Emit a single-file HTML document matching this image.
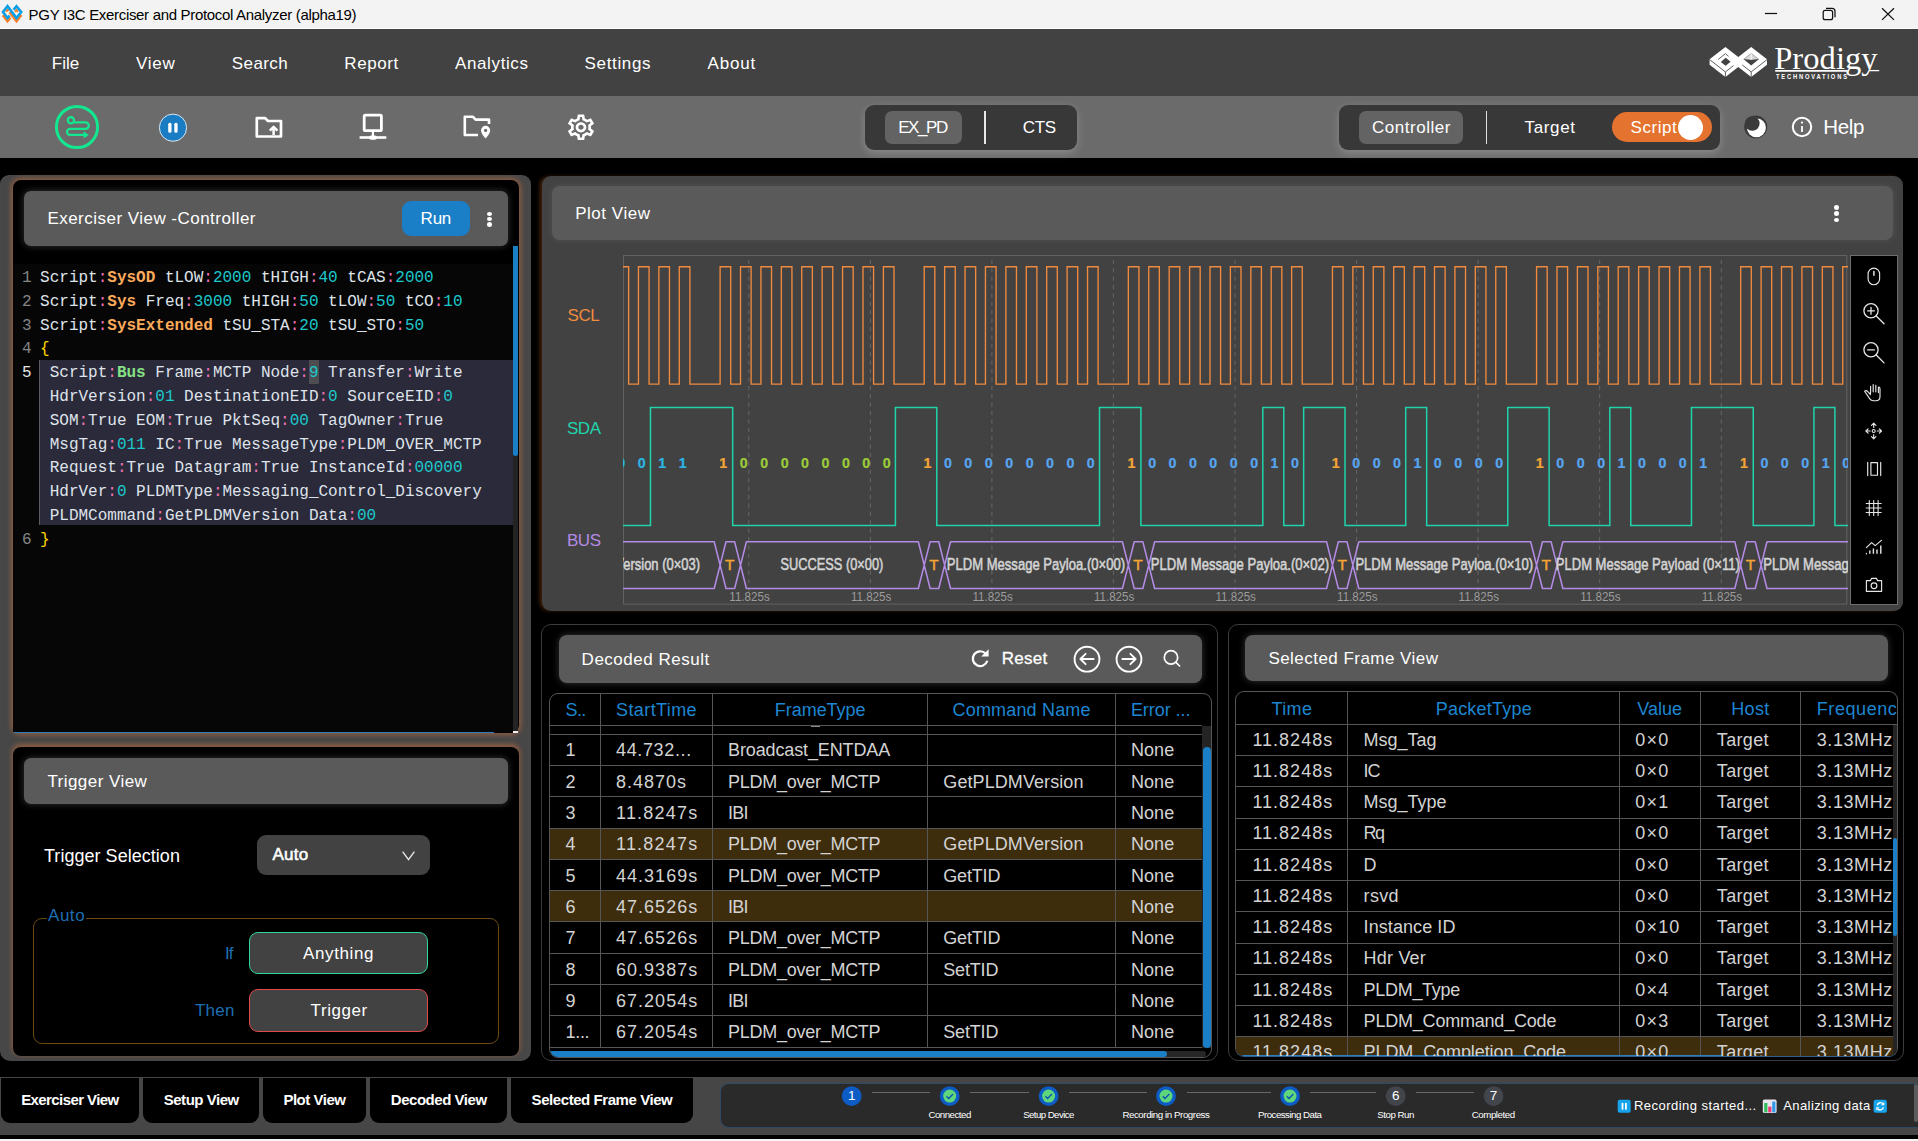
<!DOCTYPE html><html><head><meta charset="utf-8"><title>PGY I3C Exerciser and Protocol Analyzer</title><style>html,body{margin:0;padding:0}body{width:1918px;height:1141px;position:relative;overflow:hidden;background:#000;font-family:'Liberation Sans',sans-serif}</style></head><body><div style="position:absolute;left:0px;top:0px;width:1918px;height:28px;background:#f3f3f3"></div><div style="position:absolute;left:0px;top:28px;width:1918px;height:1px;background:#fbfbfb"></div><svg style="position:absolute;left:0;top:0" width="26" height="28" viewBox="0 0 26 28">
<g fill="none" stroke-width="2.6" stroke-linejoin="miter">
<path d="M2.8 15.3 L7.5 21.2 L10.4 17.6 M9.5 12.2 L16.5 21.2 L21.4 15.0" stroke="#ff7f27"/>
<path d="M5.6 11.6 L7.5 9.9 L8.6 11.0 M14.9 11.9 L16.5 10.0 L18.0 11.9" stroke="#ff7f27" stroke-width="2"/>
<path d="M9.6 15.6 L7.5 18.1 L3 12 L7.5 6.2 L16.5 18 L21.2 12 L16.5 6.2 L13.6 9.8" stroke="#0a9fe8"/>
</g></svg><span style="position:absolute;left:28.60px;top:5.15px;line-height:20px;font-size:15px;color:#000;white-space:pre;letter-spacing:-0.317px;">PGY I3C Exerciser and Protocol Analyzer (alpha19)</span><svg style="position:absolute;left:1750px;top:0" width="168" height="28" viewBox="1750 0 168 28" fill="none" stroke="#111" stroke-width="1.25">
<path d="M1764.9 13.5 H1777.1"/>
<rect x="1823.2" y="10.4" width="9.4" height="9.3" rx="2"/>
<path d="M1826 8.3 H1832 a3 3 0 0 1 3 3 V17.2"/>
<path d="M1882 8.2 L1894 19.9 M1894 8.2 L1882 19.9"/>
</svg><div style="position:absolute;left:0px;top:29px;width:1918px;height:67px;background:#424242"></div><span style="position:absolute;left:51.80px;top:53.15px;line-height:22px;font-size:17px;color:#fff;white-space:pre;">File</span><span style="position:absolute;left:136.00px;top:53.15px;line-height:22px;font-size:17px;color:#fff;white-space:pre;letter-spacing:0.718px;">View</span><span style="position:absolute;left:231.80px;top:53.15px;line-height:22px;font-size:17px;color:#fff;white-space:pre;letter-spacing:0.405px;">Search</span><span style="position:absolute;left:344.30px;top:53.15px;line-height:22px;font-size:17px;color:#fff;white-space:pre;letter-spacing:0.594px;">Report</span><span style="position:absolute;left:455.00px;top:53.15px;line-height:22px;font-size:17px;color:#fff;white-space:pre;letter-spacing:0.621px;">Analytics</span><span style="position:absolute;left:584.50px;top:53.15px;line-height:22px;font-size:17px;color:#fff;white-space:pre;letter-spacing:0.666px;">Settings</span><span style="position:absolute;left:707.60px;top:53.15px;line-height:22px;font-size:17px;color:#fff;white-space:pre;letter-spacing:0.791px;">About</span><svg style="position:absolute;left:1700px;top:36px" width="200" height="56" viewBox="1700 36 200 56"><path d="M1709.6000000000001 59.3 L1725.4 47.0 L1741.2 59.3 V64.7 L1725.4 77.0 L1709.6000000000001 64.7 Z" fill="#fff"/><path d="M1735.4 59.3 L1751.2 47.0 L1767.0 59.3 V64.7 L1751.2 77.0 L1735.4 64.7 Z" fill="#fff"/><g stroke="#424242" stroke-width="0.85" fill="none"><path d="M1709.6000000000001 59.599999999999994 L1725.4 71.89999999999999 L1733.6000000000001 65.5 M1725.4 71.89999999999999 V77.0"/><path d="M1742.2 64.89999999999999 L1751.2 71.89999999999999 L1767.0 59.599999999999994 M1751.2 71.89999999999999 V77.0"/></g><path d="M1743.6000000000001 59.3 L1751.2 53.4 L1758.8 59.3 Z" fill="#d9d9d9"/><path d="M1743.4 58.9 L1751.2 65.6 L1759.0 58.9 L1751.2 59.8 Z" fill="#424242"/><path d="M1743.6000000000001 59.3 L1751.2 53.4 L1758.8 59.3" stroke="#8c8c8c" stroke-width="0.7" fill="none"/><path d="M1751.2 53.4 V59.699999999999996" stroke="#fff" stroke-width="0.9"/><path d="M1720.8000000000002 61.9 L1725.7 57.699999999999996 L1730.6000000000001 61.699999999999996 L1725.7 65.7 Z" fill="#424242"/><path d="M1718.1000000000001 59.5 L1725.4 53.699999999999996 L1728.6000000000001 56.3" stroke="#424242" stroke-width="0.8" fill="none"/><path d="M1775.2 70.9 H1847" stroke="#fff" stroke-width="1.9"/><path d="M1869.5 70.6 H1879.2" stroke="#fff" stroke-width="1.3"/></svg><span style="position:absolute;left:1774.20px;top:37.85px;line-height:40px;font-size:32.5px;color:#fff;white-space:pre;font-family:'Liberation Serif',serif;letter-spacing:0.077px;">Prodigy</span><span style="position:absolute;left:1775.60px;top:72.15px;line-height:10px;font-size:7.4px;color:#fff;white-space:pre;font-weight:700;letter-spacing:2.338px;transform:scaleX(0.78);transform-origin:0 50%;">TECHNOVATIONS</span><div style="position:absolute;left:0px;top:96px;width:1918px;height:62px;background:#6b6b6b"></div><svg style="position:absolute;left:50px;top:100px" width="56" height="56" viewBox="50 100 56 56" fill="none">
<circle cx="77" cy="127" r="20.6" stroke="#12e890" stroke-width="3"/>
<g stroke="#12e890" stroke-width="2.2" stroke-linecap="round">
<circle cx="70.9" cy="120.3" r="3.1"/>
<path d="M74.6 122.4 H85.6 a3.2 3.2 0 0 1 0 6.4 H70 a3.05 3.05 0 0 0 0 6.1 H84.5"/>
</g>
<path d="M83.6 131.2 L88.8 134.9 L83.6 138.6 Z" fill="#12e890"/>
</svg><svg style="position:absolute;left:155px;top:110px" width="36" height="36" viewBox="155 110 36 36">
<circle cx="173" cy="127.7" r="13.6" fill="#1a7dc4" stroke="#dbe6ee" stroke-width="1"/>
<rect x="168.2" y="122.8" width="3.3" height="10" rx="1.5" fill="#fff"/><rect x="174.3" y="122.8" width="3.3" height="10" rx="1.5" fill="#fff"/>
</svg><svg style="position:absolute;left:250px;top:110px" width="40" height="36" viewBox="250 110 40 36" fill="none" stroke="#fff" stroke-width="2.7" stroke-linejoin="round">
<path d="M256.8 118.2 H265.2 L268 121 H281 V136.5 H256.8 Z"/>
<path d="M273.6 135 V127.5 M269.8 130.6 L273.6 126.8 L277.4 130.6" stroke-width="2.5"/>
</svg><svg style="position:absolute;left:355px;top:110px" width="40" height="36" viewBox="355 110 40 36" fill="none" stroke="#fff">
<rect x="364.2" y="115.2" width="17.2" height="15.4" rx="1.2" stroke-width="2.8"/>
<path d="M372.9 130.6 V136" stroke-width="2.2"/>
<path d="M359.6 137.5 H386.3" stroke-width="2.6"/>
<rect x="369" y="135.4" width="8" height="4.4" rx="2.2" fill="#fff" stroke="none"/>
</svg><svg style="position:absolute;left:458px;top:110px" width="40" height="36" viewBox="458 110 40 36" fill="none" stroke="#fff" stroke-width="2.6" stroke-linejoin="round">
<path d="M478 135 H464.8 V116.8 H473 L475.6 119.6 H489 V124"/>
<path d="M485.6 125.8 a4.6 4.6 0 0 1 4.6 4.6 c0 3.2 -4.6 8 -4.6 8 c0 0 -4.6 -4.8 -4.6 -8 a4.6 4.6 0 0 1 4.6 -4.6 Z" fill="#fff" stroke="none"/>
<circle cx="485.6" cy="130.4" r="1.6" fill="#6b6b6b" stroke="none"/>
</svg><svg style="position:absolute;left:565px;top:112.2px" width="32" height="30.6" viewBox="0 0 24 24" preserveAspectRatio="none" fill="#fff">
<path d="M19.43 12.98c.04-.32.07-.64.07-.98 0-.34-.03-.66-.07-.98l2.11-1.65c.19-.15.24-.42.12-.64l-2-3.46c-.09-.16-.26-.25-.44-.25-.06 0-.12.01-.17.03l-2.49 1c-.52-.4-1.08-.73-1.69-.98l-.38-2.65C14.46 2.18 14.25 2 14 2h-4c-.25 0-.46.18-.49.42l-.38 2.65c-.61.25-1.17.59-1.69.98l-2.49-1c-.06-.02-.12-.03-.18-.03-.17 0-.34.09-.43.25l-2 3.46c-.13.22-.07.49.12.64l2.11 1.65c-.04.32-.07.65-.07.98 0 .33.03.66.07.98l-2.11 1.65c-.19.15-.24.42-.12.64l2 3.46c.09.16.26.25.44.25.06 0 .12-.01.17-.03l2.49-1c.52.4 1.08.73 1.69.98l.38 2.65c.03.24.24.42.49.42h4c.25 0 .46-.18.49-.42l.38-2.65c.61-.25 1.17-.59 1.69-.98l2.49 1c.06.02.12.03.18.03.17 0 .34-.09.43-.25l2-3.46c.12-.22.07-.49-.12-.64l-2.11-1.65zm-1.98-1.71c.04.31.05.52.05.73 0 .21-.02.43-.05.73l-.14 1.13.89.7 1.08.84-.7 1.21-1.27-.51-1.04-.42-.9.68c-.43.32-.84.56-1.25.73l-1.06.43-.16 1.13-.2 1.35h-1.4l-.19-1.35-.16-1.13-1.06-.43c-.43-.18-.83-.41-1.23-.71l-.91-.7-1.06.43-1.27.51-.7-1.21 1.08-.84.89-.7-.14-1.13c-.03-.31-.05-.54-.05-.74s.02-.43.05-.73l.14-1.13-.89-.7-1.08-.84.7-1.21 1.27.51 1.04.42.9-.68c.43-.32.84-.56 1.25-.73l1.06-.43.16-1.13.2-1.35h1.39l.19 1.35.16 1.13 1.06.43c.43.18.83.41 1.23.71l.91.7 1.06-.43 1.27-.51.7 1.21-1.07.85-.89.7.14 1.13zM12 8c-2.21 0-4 1.79-4 4s1.790 4 4 4 4-1.79 4-4-1.79-4-4-4zm0 6c-1.1 0-2-.9-2-2s.9-2 2-2 2 .9 2 2-.9 2-2 2z"/>
</svg><div style="position:absolute;left:865px;top:105px;width:212px;height:45px;background:#383838;border-radius:9px;box-shadow:0 3px 8px rgba(255,255,255,.22)"></div><div style="position:absolute;left:885px;top:111px;width:77px;height:33px;background:#636363;border-radius:7px"></div><div style="position:absolute;left:984.4px;top:111px;width:1.8px;height:33px;background:#e8e8e8"></div><span style="position:absolute;left:898.20px;top:117.05px;line-height:22px;font-size:17px;color:#fff;white-space:pre;letter-spacing:-1.413px;">EX_PD</span><span style="position:absolute;left:1022.80px;top:117.05px;line-height:22px;font-size:17px;color:#fff;white-space:pre;letter-spacing:-0.300px;">CTS</span><div style="position:absolute;left:1339px;top:105px;width:381px;height:45px;background:#383838;border-radius:9px;box-shadow:0 3px 8px rgba(255,255,255,.22)"></div><div style="position:absolute;left:1359px;top:111px;width:104px;height:33px;background:#636363;border-radius:7px"></div><div style="position:absolute;left:1486px;top:111px;width:1.2px;height:33px;background:#e0e0e0"></div><span style="position:absolute;left:1372.00px;top:117.05px;line-height:22px;font-size:17px;color:#fff;white-space:pre;letter-spacing:0.533px;">Controller</span><span style="position:absolute;left:1524.50px;top:117.05px;line-height:22px;font-size:17px;color:#fff;white-space:pre;letter-spacing:0.650px;">Target</span><div style="position:absolute;left:1611.7px;top:111.6px;width:100.3px;height:30.8px;background:#e57330;border-radius:16px"></div><span style="position:absolute;left:1630.50px;top:117.05px;line-height:22px;font-size:17px;color:#fff;white-space:pre;letter-spacing:0.546px;">Script</span><div style="position:absolute;left:1678.2px;top:114.8px;width:25px;height:25px;background:#fff;border-radius:50%"></div><svg style="position:absolute;left:1740px;top:112px" width="32" height="32" viewBox="1740 112 32 32">
<circle cx="1755.7" cy="126.9" r="11.5" fill="#3a3a3a"/><circle cx="1756.4" cy="127.7" r="9.5" fill="#fff"/><circle cx="1752.3" cy="123.5" r="7.3" fill="#3a3a3a"/>
</svg><svg style="position:absolute;left:1788px;top:113px" width="28" height="28" viewBox="1788 113 28 28" fill="none">
<circle cx="1802" cy="127" r="9.2" stroke="#fff" stroke-width="2"/>
<path d="M1802 126 V132" stroke="#fff" stroke-width="1.8"/><circle cx="1802" cy="122.6" r="1.15" fill="#fff"/>
</svg><span style="position:absolute;left:1823.20px;top:112.65px;line-height:27px;font-size:20.5px;color:#fff;white-space:pre;letter-spacing:-0.324px;">Help</span><div style="position:absolute;left:0px;top:175px;width:531px;height:885.5px;background:#474747;border-radius:9px 9px 10px 10px"></div><div style="position:absolute;left:13px;top:180.3px;width:506px;height:552.7px;background:#000;border-radius:8px;box-shadow:0 0 5px 1.5px rgba(200,112,62,.55);"></div><div style="position:absolute;left:24px;top:191px;width:484px;height:55px;background:#5a5a5a;border-radius:7px;box-shadow:0 0 6px 1px rgba(200,200,200,.2);"></div><span style="position:absolute;left:47.40px;top:208.45px;line-height:22px;font-size:17px;color:#fff;white-space:pre;letter-spacing:0.476px;">Exerciser View -Controller</span><div style="position:absolute;left:402px;top:201px;width:68px;height:35px;background:#1a7fc6;border-radius:9px"></div><span style="position:absolute;left:420.60px;top:208.05px;line-height:22px;font-size:17px;color:#fff;white-space:pre;letter-spacing:-0.244px;">Run</span><div style="position:absolute;left:486.6px;top:212.20000000000002px;width:5px;height:4.2px;background:#fff;border-radius:50%"></div><div style="position:absolute;left:486.6px;top:217.20000000000002px;width:5px;height:4.2px;background:#fff;border-radius:50%"></div><div style="position:absolute;left:486.6px;top:222.4px;width:5px;height:4.2px;background:#fff;border-radius:50%"></div><div style="position:absolute;left:13px;top:264px;width:500px;height:468px;background:#060606"></div><div style="position:absolute;left:512.6px;top:246px;width:5.6px;height:486.5px;background:#232323"></div><div style="position:absolute;left:513.2px;top:246px;width:5px;height:209.6px;background:#1a7fc6;border-radius:0 0 3px 3px"></div><div style="position:absolute;left:14px;top:731.6px;width:480px;height:1.4px;background:#2a7fc0"></div><div style="position:absolute;left:512.5px;top:730.8px;width:5.5px;height:2.2px;background:#f0f0f0"></div><div style="position:absolute;left:39px;top:360.3px;width:473.8px;height:165.2px;background:#2b2a3a;border-left:1px solid #5a5a62;box-sizing:border-box"></div><div style="position:absolute;left:309.2px;top:360.3px;width:9.8px;height:23.6px;background:#4d4d52"></div><span style="position:absolute;left:14px;width:17.6px;text-align:right;top:266.00px;line-height:24px;font-size:16px;font-family:'Liberation Mono',monospace;color:#858585">1</span><span style="position:absolute;left:40.10px;top:266.00px;line-height:24px;font-size:16px;font-family:'Liberation Mono',monospace;color:#dfe3ea;white-space:pre;">Script</span><span style="position:absolute;left:97.70px;top:266.00px;line-height:24px;font-size:16px;font-family:'Liberation Mono',monospace;color:#ee72b4;white-space:pre;">:</span><span style="position:absolute;left:107.30px;top:266.00px;line-height:24px;font-size:16px;font-family:'Liberation Mono',monospace;color:#fdaa5a;white-space:pre;font-weight:700;">SysOD</span><span style="position:absolute;left:164.90px;top:266.00px;line-height:24px;font-size:16px;font-family:'Liberation Mono',monospace;color:#dfe3ea;white-space:pre;">tLOW</span><span style="position:absolute;left:203.30px;top:266.00px;line-height:24px;font-size:16px;font-family:'Liberation Mono',monospace;color:#ee72b4;white-space:pre;">:</span><span style="position:absolute;left:212.90px;top:266.00px;line-height:24px;font-size:16px;font-family:'Liberation Mono',monospace;color:#1cc8cc;white-space:pre;">2000</span><span style="position:absolute;left:260.90px;top:266.00px;line-height:24px;font-size:16px;font-family:'Liberation Mono',monospace;color:#dfe3ea;white-space:pre;">tHIGH</span><span style="position:absolute;left:308.90px;top:266.00px;line-height:24px;font-size:16px;font-family:'Liberation Mono',monospace;color:#ee72b4;white-space:pre;">:</span><span style="position:absolute;left:318.50px;top:266.00px;line-height:24px;font-size:16px;font-family:'Liberation Mono',monospace;color:#1cc8cc;white-space:pre;">40</span><span style="position:absolute;left:347.30px;top:266.00px;line-height:24px;font-size:16px;font-family:'Liberation Mono',monospace;color:#dfe3ea;white-space:pre;">tCAS</span><span style="position:absolute;left:385.70px;top:266.00px;line-height:24px;font-size:16px;font-family:'Liberation Mono',monospace;color:#ee72b4;white-space:pre;">:</span><span style="position:absolute;left:395.30px;top:266.00px;line-height:24px;font-size:16px;font-family:'Liberation Mono',monospace;color:#1cc8cc;white-space:pre;">2000</span><span style="position:absolute;left:14px;width:17.6px;text-align:right;top:289.80px;line-height:24px;font-size:16px;font-family:'Liberation Mono',monospace;color:#858585">2</span><span style="position:absolute;left:40.10px;top:289.80px;line-height:24px;font-size:16px;font-family:'Liberation Mono',monospace;color:#dfe3ea;white-space:pre;">Script</span><span style="position:absolute;left:97.70px;top:289.80px;line-height:24px;font-size:16px;font-family:'Liberation Mono',monospace;color:#ee72b4;white-space:pre;">:</span><span style="position:absolute;left:107.30px;top:289.80px;line-height:24px;font-size:16px;font-family:'Liberation Mono',monospace;color:#fdaa5a;white-space:pre;font-weight:700;">Sys</span><span style="position:absolute;left:145.70px;top:289.80px;line-height:24px;font-size:16px;font-family:'Liberation Mono',monospace;color:#dfe3ea;white-space:pre;">Freq</span><span style="position:absolute;left:184.10px;top:289.80px;line-height:24px;font-size:16px;font-family:'Liberation Mono',monospace;color:#ee72b4;white-space:pre;">:</span><span style="position:absolute;left:193.70px;top:289.80px;line-height:24px;font-size:16px;font-family:'Liberation Mono',monospace;color:#1cc8cc;white-space:pre;">3000</span><span style="position:absolute;left:241.70px;top:289.80px;line-height:24px;font-size:16px;font-family:'Liberation Mono',monospace;color:#dfe3ea;white-space:pre;">tHIGH</span><span style="position:absolute;left:289.70px;top:289.80px;line-height:24px;font-size:16px;font-family:'Liberation Mono',monospace;color:#ee72b4;white-space:pre;">:</span><span style="position:absolute;left:299.30px;top:289.80px;line-height:24px;font-size:16px;font-family:'Liberation Mono',monospace;color:#1cc8cc;white-space:pre;">50</span><span style="position:absolute;left:328.10px;top:289.80px;line-height:24px;font-size:16px;font-family:'Liberation Mono',monospace;color:#dfe3ea;white-space:pre;">tLOW</span><span style="position:absolute;left:366.50px;top:289.80px;line-height:24px;font-size:16px;font-family:'Liberation Mono',monospace;color:#ee72b4;white-space:pre;">:</span><span style="position:absolute;left:376.10px;top:289.80px;line-height:24px;font-size:16px;font-family:'Liberation Mono',monospace;color:#1cc8cc;white-space:pre;">50</span><span style="position:absolute;left:404.90px;top:289.80px;line-height:24px;font-size:16px;font-family:'Liberation Mono',monospace;color:#dfe3ea;white-space:pre;">tCO</span><span style="position:absolute;left:433.70px;top:289.80px;line-height:24px;font-size:16px;font-family:'Liberation Mono',monospace;color:#ee72b4;white-space:pre;">:</span><span style="position:absolute;left:443.30px;top:289.80px;line-height:24px;font-size:16px;font-family:'Liberation Mono',monospace;color:#1cc8cc;white-space:pre;">10</span><span style="position:absolute;left:14px;width:17.6px;text-align:right;top:313.60px;line-height:24px;font-size:16px;font-family:'Liberation Mono',monospace;color:#858585">3</span><span style="position:absolute;left:40.10px;top:313.60px;line-height:24px;font-size:16px;font-family:'Liberation Mono',monospace;color:#dfe3ea;white-space:pre;">Script</span><span style="position:absolute;left:97.70px;top:313.60px;line-height:24px;font-size:16px;font-family:'Liberation Mono',monospace;color:#ee72b4;white-space:pre;">:</span><span style="position:absolute;left:107.30px;top:313.60px;line-height:24px;font-size:16px;font-family:'Liberation Mono',monospace;color:#fdaa5a;white-space:pre;font-weight:700;">SysExtended</span><span style="position:absolute;left:222.50px;top:313.60px;line-height:24px;font-size:16px;font-family:'Liberation Mono',monospace;color:#dfe3ea;white-space:pre;">tSU_STA</span><span style="position:absolute;left:289.70px;top:313.60px;line-height:24px;font-size:16px;font-family:'Liberation Mono',monospace;color:#ee72b4;white-space:pre;">:</span><span style="position:absolute;left:299.30px;top:313.60px;line-height:24px;font-size:16px;font-family:'Liberation Mono',monospace;color:#1cc8cc;white-space:pre;">20</span><span style="position:absolute;left:328.10px;top:313.60px;line-height:24px;font-size:16px;font-family:'Liberation Mono',monospace;color:#dfe3ea;white-space:pre;">tSU_STO</span><span style="position:absolute;left:395.30px;top:313.60px;line-height:24px;font-size:16px;font-family:'Liberation Mono',monospace;color:#ee72b4;white-space:pre;">:</span><span style="position:absolute;left:404.90px;top:313.60px;line-height:24px;font-size:16px;font-family:'Liberation Mono',monospace;color:#1cc8cc;white-space:pre;">50</span><span style="position:absolute;left:14px;width:17.6px;text-align:right;top:337.40px;line-height:24px;font-size:16px;font-family:'Liberation Mono',monospace;color:#858585">4</span><span style="position:absolute;left:40.10px;top:337.40px;line-height:24px;font-size:16px;font-family:'Liberation Mono',monospace;color:#ffd700;white-space:pre;">{</span><span style="position:absolute;left:14px;width:17.6px;text-align:right;top:361.20px;line-height:24px;font-size:16px;font-family:'Liberation Mono',monospace;color:#e4e4e4">5</span><span style="position:absolute;left:49.70px;top:361.20px;line-height:24px;font-size:16px;font-family:'Liberation Mono',monospace;color:#dfe3ea;white-space:pre;">Script</span><span style="position:absolute;left:107.30px;top:361.20px;line-height:24px;font-size:16px;font-family:'Liberation Mono',monospace;color:#ee72b4;white-space:pre;">:</span><span style="position:absolute;left:116.90px;top:361.20px;line-height:24px;font-size:16px;font-family:'Liberation Mono',monospace;color:#84e184;white-space:pre;font-weight:700;">Bus</span><span style="position:absolute;left:155.30px;top:361.20px;line-height:24px;font-size:16px;font-family:'Liberation Mono',monospace;color:#dfe3ea;white-space:pre;">Frame</span><span style="position:absolute;left:203.30px;top:361.20px;line-height:24px;font-size:16px;font-family:'Liberation Mono',monospace;color:#ee72b4;white-space:pre;">:</span><span style="position:absolute;left:212.90px;top:361.20px;line-height:24px;font-size:16px;font-family:'Liberation Mono',monospace;color:#dfe3ea;white-space:pre;">MCTP</span><span style="position:absolute;left:260.90px;top:361.20px;line-height:24px;font-size:16px;font-family:'Liberation Mono',monospace;color:#dfe3ea;white-space:pre;">Node</span><span style="position:absolute;left:299.30px;top:361.20px;line-height:24px;font-size:16px;font-family:'Liberation Mono',monospace;color:#ee72b4;white-space:pre;">:</span><span style="position:absolute;left:308.90px;top:361.20px;line-height:24px;font-size:16px;font-family:'Liberation Mono',monospace;color:#1cc8cc;white-space:pre;">9</span><span style="position:absolute;left:328.10px;top:361.20px;line-height:24px;font-size:16px;font-family:'Liberation Mono',monospace;color:#dfe3ea;white-space:pre;">Transfer</span><span style="position:absolute;left:404.90px;top:361.20px;line-height:24px;font-size:16px;font-family:'Liberation Mono',monospace;color:#ee72b4;white-space:pre;">:</span><span style="position:absolute;left:414.50px;top:361.20px;line-height:24px;font-size:16px;font-family:'Liberation Mono',monospace;color:#dfe3ea;white-space:pre;">Write</span><span style="position:absolute;left:49.70px;top:385.00px;line-height:24px;font-size:16px;font-family:'Liberation Mono',monospace;color:#dfe3ea;white-space:pre;">HdrVersion</span><span style="position:absolute;left:145.70px;top:385.00px;line-height:24px;font-size:16px;font-family:'Liberation Mono',monospace;color:#ee72b4;white-space:pre;">:</span><span style="position:absolute;left:155.30px;top:385.00px;line-height:24px;font-size:16px;font-family:'Liberation Mono',monospace;color:#1cc8cc;white-space:pre;">01</span><span style="position:absolute;left:184.10px;top:385.00px;line-height:24px;font-size:16px;font-family:'Liberation Mono',monospace;color:#dfe3ea;white-space:pre;">DestinationEID</span><span style="position:absolute;left:318.50px;top:385.00px;line-height:24px;font-size:16px;font-family:'Liberation Mono',monospace;color:#ee72b4;white-space:pre;">:</span><span style="position:absolute;left:328.10px;top:385.00px;line-height:24px;font-size:16px;font-family:'Liberation Mono',monospace;color:#1cc8cc;white-space:pre;">0</span><span style="position:absolute;left:347.30px;top:385.00px;line-height:24px;font-size:16px;font-family:'Liberation Mono',monospace;color:#dfe3ea;white-space:pre;">SourceEID</span><span style="position:absolute;left:433.70px;top:385.00px;line-height:24px;font-size:16px;font-family:'Liberation Mono',monospace;color:#ee72b4;white-space:pre;">:</span><span style="position:absolute;left:443.30px;top:385.00px;line-height:24px;font-size:16px;font-family:'Liberation Mono',monospace;color:#1cc8cc;white-space:pre;">0</span><span style="position:absolute;left:49.70px;top:408.80px;line-height:24px;font-size:16px;font-family:'Liberation Mono',monospace;color:#dfe3ea;white-space:pre;">SOM</span><span style="position:absolute;left:78.50px;top:408.80px;line-height:24px;font-size:16px;font-family:'Liberation Mono',monospace;color:#ee72b4;white-space:pre;">:</span><span style="position:absolute;left:88.10px;top:408.80px;line-height:24px;font-size:16px;font-family:'Liberation Mono',monospace;color:#dfe3ea;white-space:pre;">True</span><span style="position:absolute;left:136.10px;top:408.80px;line-height:24px;font-size:16px;font-family:'Liberation Mono',monospace;color:#dfe3ea;white-space:pre;">EOM</span><span style="position:absolute;left:164.90px;top:408.80px;line-height:24px;font-size:16px;font-family:'Liberation Mono',monospace;color:#ee72b4;white-space:pre;">:</span><span style="position:absolute;left:174.50px;top:408.80px;line-height:24px;font-size:16px;font-family:'Liberation Mono',monospace;color:#dfe3ea;white-space:pre;">True</span><span style="position:absolute;left:222.50px;top:408.80px;line-height:24px;font-size:16px;font-family:'Liberation Mono',monospace;color:#dfe3ea;white-space:pre;">PktSeq</span><span style="position:absolute;left:280.10px;top:408.80px;line-height:24px;font-size:16px;font-family:'Liberation Mono',monospace;color:#ee72b4;white-space:pre;">:</span><span style="position:absolute;left:289.70px;top:408.80px;line-height:24px;font-size:16px;font-family:'Liberation Mono',monospace;color:#1cc8cc;white-space:pre;">00</span><span style="position:absolute;left:318.50px;top:408.80px;line-height:24px;font-size:16px;font-family:'Liberation Mono',monospace;color:#dfe3ea;white-space:pre;">TagOwner</span><span style="position:absolute;left:395.30px;top:408.80px;line-height:24px;font-size:16px;font-family:'Liberation Mono',monospace;color:#ee72b4;white-space:pre;">:</span><span style="position:absolute;left:404.90px;top:408.80px;line-height:24px;font-size:16px;font-family:'Liberation Mono',monospace;color:#dfe3ea;white-space:pre;">True</span><span style="position:absolute;left:49.70px;top:432.60px;line-height:24px;font-size:16px;font-family:'Liberation Mono',monospace;color:#dfe3ea;white-space:pre;">MsgTag</span><span style="position:absolute;left:107.30px;top:432.60px;line-height:24px;font-size:16px;font-family:'Liberation Mono',monospace;color:#ee72b4;white-space:pre;">:</span><span style="position:absolute;left:116.90px;top:432.60px;line-height:24px;font-size:16px;font-family:'Liberation Mono',monospace;color:#1cc8cc;white-space:pre;">011</span><span style="position:absolute;left:155.30px;top:432.60px;line-height:24px;font-size:16px;font-family:'Liberation Mono',monospace;color:#dfe3ea;white-space:pre;">IC</span><span style="position:absolute;left:174.50px;top:432.60px;line-height:24px;font-size:16px;font-family:'Liberation Mono',monospace;color:#ee72b4;white-space:pre;">:</span><span style="position:absolute;left:184.10px;top:432.60px;line-height:24px;font-size:16px;font-family:'Liberation Mono',monospace;color:#dfe3ea;white-space:pre;">True</span><span style="position:absolute;left:232.10px;top:432.60px;line-height:24px;font-size:16px;font-family:'Liberation Mono',monospace;color:#dfe3ea;white-space:pre;">MessageType</span><span style="position:absolute;left:337.70px;top:432.60px;line-height:24px;font-size:16px;font-family:'Liberation Mono',monospace;color:#ee72b4;white-space:pre;">:</span><span style="position:absolute;left:347.30px;top:432.60px;line-height:24px;font-size:16px;font-family:'Liberation Mono',monospace;color:#dfe3ea;white-space:pre;">PLDM_OVER_MCTP</span><span style="position:absolute;left:49.70px;top:456.40px;line-height:24px;font-size:16px;font-family:'Liberation Mono',monospace;color:#dfe3ea;white-space:pre;">Request</span><span style="position:absolute;left:116.90px;top:456.40px;line-height:24px;font-size:16px;font-family:'Liberation Mono',monospace;color:#ee72b4;white-space:pre;">:</span><span style="position:absolute;left:126.50px;top:456.40px;line-height:24px;font-size:16px;font-family:'Liberation Mono',monospace;color:#dfe3ea;white-space:pre;">True</span><span style="position:absolute;left:174.50px;top:456.40px;line-height:24px;font-size:16px;font-family:'Liberation Mono',monospace;color:#dfe3ea;white-space:pre;">Datagram</span><span style="position:absolute;left:251.30px;top:456.40px;line-height:24px;font-size:16px;font-family:'Liberation Mono',monospace;color:#ee72b4;white-space:pre;">:</span><span style="position:absolute;left:260.90px;top:456.40px;line-height:24px;font-size:16px;font-family:'Liberation Mono',monospace;color:#dfe3ea;white-space:pre;">True</span><span style="position:absolute;left:308.90px;top:456.40px;line-height:24px;font-size:16px;font-family:'Liberation Mono',monospace;color:#dfe3ea;white-space:pre;">InstanceId</span><span style="position:absolute;left:404.90px;top:456.40px;line-height:24px;font-size:16px;font-family:'Liberation Mono',monospace;color:#ee72b4;white-space:pre;">:</span><span style="position:absolute;left:414.50px;top:456.40px;line-height:24px;font-size:16px;font-family:'Liberation Mono',monospace;color:#1cc8cc;white-space:pre;">00000</span><span style="position:absolute;left:49.70px;top:480.20px;line-height:24px;font-size:16px;font-family:'Liberation Mono',monospace;color:#dfe3ea;white-space:pre;">HdrVer</span><span style="position:absolute;left:107.30px;top:480.20px;line-height:24px;font-size:16px;font-family:'Liberation Mono',monospace;color:#ee72b4;white-space:pre;">:</span><span style="position:absolute;left:116.90px;top:480.20px;line-height:24px;font-size:16px;font-family:'Liberation Mono',monospace;color:#1cc8cc;white-space:pre;">0</span><span style="position:absolute;left:136.10px;top:480.20px;line-height:24px;font-size:16px;font-family:'Liberation Mono',monospace;color:#dfe3ea;white-space:pre;">PLDMType</span><span style="position:absolute;left:212.90px;top:480.20px;line-height:24px;font-size:16px;font-family:'Liberation Mono',monospace;color:#ee72b4;white-space:pre;">:</span><span style="position:absolute;left:222.50px;top:480.20px;line-height:24px;font-size:16px;font-family:'Liberation Mono',monospace;color:#dfe3ea;white-space:pre;">Messaging_Control_Discovery</span><span style="position:absolute;left:49.70px;top:504.00px;line-height:24px;font-size:16px;font-family:'Liberation Mono',monospace;color:#dfe3ea;white-space:pre;">PLDMCommand</span><span style="position:absolute;left:155.30px;top:504.00px;line-height:24px;font-size:16px;font-family:'Liberation Mono',monospace;color:#ee72b4;white-space:pre;">:</span><span style="position:absolute;left:164.90px;top:504.00px;line-height:24px;font-size:16px;font-family:'Liberation Mono',monospace;color:#dfe3ea;white-space:pre;">GetPLDMVersion</span><span style="position:absolute;left:308.90px;top:504.00px;line-height:24px;font-size:16px;font-family:'Liberation Mono',monospace;color:#dfe3ea;white-space:pre;">Data</span><span style="position:absolute;left:347.30px;top:504.00px;line-height:24px;font-size:16px;font-family:'Liberation Mono',monospace;color:#ee72b4;white-space:pre;">:</span><span style="position:absolute;left:356.90px;top:504.00px;line-height:24px;font-size:16px;font-family:'Liberation Mono',monospace;color:#1cc8cc;white-space:pre;">00</span><span style="position:absolute;left:14px;width:17.6px;text-align:right;top:527.80px;line-height:24px;font-size:16px;font-family:'Liberation Mono',monospace;color:#858585">6</span><span style="position:absolute;left:40.10px;top:527.80px;line-height:24px;font-size:16px;font-family:'Liberation Mono',monospace;color:#ffd700;white-space:pre;">}</span><div style="position:absolute;left:13px;top:747px;width:506px;height:308.6px;background:#000;border-radius:8px;box-shadow:0 -2px 5px 0.5px rgba(200,112,62,.55);"></div><div style="position:absolute;left:24px;top:758.3px;width:484.4px;height:45.7px;background:#5a5a5a;border-radius:7px;box-shadow:0 0 6px 1px rgba(200,200,200,.2);"></div><span style="position:absolute;left:47.40px;top:771.25px;line-height:22px;font-size:17px;color:#fff;white-space:pre;letter-spacing:0.456px;">Trigger View</span><span style="position:absolute;left:44.00px;top:844.55px;line-height:23px;font-size:18px;color:#fff;white-space:pre;letter-spacing:0.031px;">Trigger Selection</span><div style="position:absolute;left:257.2px;top:835.2px;width:172.5px;height:39.4px;background:#424242;border-radius:9px"></div><span style="position:absolute;left:272.40px;top:844.45px;line-height:22px;font-size:17px;color:#fff;white-space:pre;letter-spacing:0.272px;-webkit-text-stroke:0.55px #fff;">Auto</span><svg style="position:absolute;left:400px;top:848px" width="18" height="16" viewBox="400 848 18 16" fill="none" stroke="#e8e8e8" stroke-width="1.4"><path d="M402.6 851.6 L408.5 859.6 L414.4 851.6"/></svg><div style="position:absolute;left:33.4px;top:917.8px;width:465.6px;height:126.5px;border:1px solid #6b4a12;border-radius:9px;box-sizing:border-box"></div><div style="position:absolute;left:46.5px;top:908px;width:39px;height:16px;background:#000"></div><span style="position:absolute;left:48.00px;top:905.05px;line-height:22px;font-size:17px;color:#1d6fb2;white-space:pre;letter-spacing:0.539px;">Auto</span><span style="position:absolute;left:225.00px;top:942.65px;line-height:22px;font-size:17px;color:#1d6fb2;white-space:pre;letter-spacing:-0.853px;">If</span><div style="position:absolute;left:249px;top:932.2px;width:179px;height:41.5px;background:#424242;border:1.5px solid #2fd6a2;border-radius:9px;box-sizing:border-box"></div><span style="position:absolute;left:302.90px;top:942.65px;line-height:22px;font-size:17px;color:#fff;white-space:pre;letter-spacing:0.647px;">Anything</span><span style="position:absolute;left:195.00px;top:999.65px;line-height:22px;font-size:17px;color:#1d6fb2;white-space:pre;letter-spacing:0.217px;">Then</span><div style="position:absolute;left:249px;top:989px;width:179px;height:42.6px;background:#424242;border:1.5px solid #e04a4a;border-radius:9px;box-sizing:border-box"></div><span style="position:absolute;left:310.60px;top:999.65px;line-height:22px;font-size:17px;color:#fff;white-space:pre;letter-spacing:0.564px;">Trigger</span><div style="position:absolute;left:541.5px;top:175.6px;width:1361.5px;height:435.2px;background:#424242;border-radius:9px;box-shadow:-3px 0 4px -1px rgba(150,75,25,.5)"></div><div style="position:absolute;left:551.5px;top:186px;width:1341.5px;height:54.4px;background:#5a5a5a;border-radius:8px;box-shadow:0 0 6px 1px rgba(210,210,210,.1)"></div><span style="position:absolute;left:575.20px;top:203.05px;line-height:22px;font-size:17px;color:#fff;white-space:pre;letter-spacing:0.530px;">Plot View</span><div style="position:absolute;left:1834.3px;top:205.4px;width:5px;height:4.2px;background:#fff;border-radius:50%"></div><div style="position:absolute;left:1834.3px;top:211.4px;width:5px;height:4.2px;background:#fff;border-radius:50%"></div><div style="position:absolute;left:1834.3px;top:217.5px;width:5px;height:4.2px;background:#fff;border-radius:50%"></div><span style="position:absolute;left:567.60px;top:305.05px;line-height:22px;font-size:17px;color:#ef8a3e;white-space:pre;letter-spacing:-0.439px;">SCL</span><span style="position:absolute;left:567.00px;top:418.25px;line-height:22px;font-size:17px;color:#1fd4aa;white-space:pre;letter-spacing:-0.484px;">SDA</span><span style="position:absolute;left:567.00px;top:529.65px;line-height:22px;font-size:17px;color:#b48be4;white-space:pre;letter-spacing:-0.484px;">BUS</span><svg style="position:absolute;left:623.4px;top:255.2px;overflow:hidden" width="1224.3" height="349.6" viewBox="623.4 255.2 1224.3 349.6" font-family="Liberation Sans, sans-serif"><rect x="623.9" y="255.7" width="1223.3" height="348.6" fill="none" stroke="#626262" stroke-width="1"/><path d="M749.2 260 V598" stroke="#666" stroke-width="1" stroke-dasharray="4.2 4.2" fill="none"/><path d="M870.8 260 V598" stroke="#666" stroke-width="1" stroke-dasharray="4.2 4.2" fill="none"/><path d="M992.3 260 V598" stroke="#666" stroke-width="1" stroke-dasharray="4.2 4.2" fill="none"/><path d="M1113.8 260 V598" stroke="#666" stroke-width="1" stroke-dasharray="4.2 4.2" fill="none"/><path d="M1235.4 260 V598" stroke="#666" stroke-width="1" stroke-dasharray="4.2 4.2" fill="none"/><path d="M1357.0 260 V598" stroke="#666" stroke-width="1" stroke-dasharray="4.2 4.2" fill="none"/><path d="M1478.5 260 V598" stroke="#666" stroke-width="1" stroke-dasharray="4.2 4.2" fill="none"/><path d="M1600.1 260 V598" stroke="#666" stroke-width="1" stroke-dasharray="4.2 4.2" fill="none"/><path d="M1721.6 260 V598" stroke="#666" stroke-width="1" stroke-dasharray="4.2 4.2" fill="none"/><path d="M593.03 384.4 H598.03 V267.0 H608.63 V384.4 H618.44 V267.0 H629.04 V384.4 H638.85 V267.0 H649.45 V384.4 H659.26 V267.0 H669.86 V384.4 H679.68 V267.0 H690.28 V384.4 H720.50 V267.0 H731.10 V384.4 H740.91 V267.0 H751.51 V384.4 H761.32 V267.0 H771.92 V384.4 H781.74 V267.0 H792.34 V384.4 H802.15 V267.0 H812.75 V384.4 H822.56 V267.0 H833.16 V384.4 H842.97 V267.0 H853.57 V384.4 H863.38 V267.0 H873.98 V384.4 H883.80 V267.0 H894.40 V384.4 H924.62 V267.0 H935.22 V384.4 H945.03 V267.0 H955.63 V384.4 H965.44 V267.0 H976.04 V384.4 H985.86 V267.0 H996.46 V384.4 H1006.27 V267.0 H1016.87 V384.4 H1026.68 V267.0 H1037.28 V384.4 H1047.09 V267.0 H1057.69 V384.4 H1067.50 V267.0 H1078.10 V384.4 H1087.92 V267.0 H1098.52 V384.4 H1128.74 V267.0 H1139.34 V384.4 H1149.15 V267.0 H1159.75 V384.4 H1169.56 V267.0 H1180.16 V384.4 H1189.98 V267.0 H1200.58 V384.4 H1210.39 V267.0 H1220.99 V384.4 H1230.80 V267.0 H1241.40 V384.4 H1251.21 V267.0 H1261.81 V384.4 H1271.62 V267.0 H1282.22 V384.4 H1292.04 V267.0 H1302.64 V384.4 H1332.86 V267.0 H1343.46 V384.4 H1353.27 V267.0 H1363.87 V384.4 H1373.68 V267.0 H1384.28 V384.4 H1394.10 V267.0 H1404.70 V384.4 H1414.51 V267.0 H1425.11 V384.4 H1434.92 V267.0 H1445.52 V384.4 H1455.33 V267.0 H1465.93 V384.4 H1475.74 V267.0 H1486.34 V384.4 H1496.16 V267.0 H1506.76 V384.4 H1536.98 V267.0 H1547.58 V384.4 H1557.39 V267.0 H1567.99 V384.4 H1577.80 V267.0 H1588.40 V384.4 H1598.22 V267.0 H1608.82 V384.4 H1618.63 V267.0 H1629.23 V384.4 H1639.04 V267.0 H1649.64 V384.4 H1659.45 V267.0 H1670.05 V384.4 H1679.86 V267.0 H1690.46 V384.4 H1700.28 V267.0 H1710.88 V384.4 H1741.10 V267.0 H1751.70 V384.4 H1761.51 V267.0 H1772.11 V384.4 H1781.92 V267.0 H1792.52 V384.4 H1802.34 V267.0 H1812.94 V384.4 H1822.75 V267.0 H1833.35 V384.4 H1843.16 V267.0 H1853.76 V384.4 H1863.57 V267.0 H1874.17 V384.4 H1867.7" fill="none" stroke="#ef8a3e" stroke-width="1.35"/><path d="M273.86 407.6 H324.82 V525.6 H487.57 V407.6 H528.94 V525.6 H650.86 V407.6 H733.06 V525.6 H895.81 V407.6 H937.18 V525.6 H1099.93 V407.6 H1141.30 V525.6 H1263.22 V407.6 H1284.19 V525.6 H1304.05 V407.6 H1345.42 V525.6 H1406.11 V407.6 H1427.07 V525.6 H1508.17 V407.6 H1549.54 V525.6 H1610.23 V407.6 H1631.19 V525.6 H1691.88 V407.6 H1753.66 V525.6 H1814.35 V407.6 H1835.31 V525.6 H1916.41 V407.6 H1957.78 V525.6 H2120.53 V407.6 H1867.7" fill="none" stroke="#1fd4aa" stroke-width="1.5"/><text x="519.6" y="468.5" text-anchor="middle" font-size="14.2" font-weight="700" fill="#f3a436" stroke="#f3a436" stroke-width="0.25">1</text><text x="621.7" y="468.5" text-anchor="middle" font-size="14.2" font-weight="700" fill="#2bb5e2" stroke="#2bb5e2" stroke-width="0.25">0</text><text x="642.2" y="468.5" text-anchor="middle" font-size="14.2" font-weight="700" fill="#2bb5e2" stroke="#2bb5e2" stroke-width="0.25">0</text><text x="662.6" y="468.5" text-anchor="middle" font-size="14.2" font-weight="700" fill="#2bb5e2" stroke="#2bb5e2" stroke-width="0.25">1</text><text x="683.0" y="468.5" text-anchor="middle" font-size="14.2" font-weight="700" fill="#2bb5e2" stroke="#2bb5e2" stroke-width="0.25">1</text><text x="723.7" y="468.5" text-anchor="middle" font-size="14.2" font-weight="700" fill="#f3a436" stroke="#f3a436" stroke-width="0.25">1</text><text x="744.2" y="468.5" text-anchor="middle" font-size="14.2" font-weight="700" fill="#9ccc3a" stroke="#9ccc3a" stroke-width="0.25">0</text><text x="764.6" y="468.5" text-anchor="middle" font-size="14.2" font-weight="700" fill="#9ccc3a" stroke="#9ccc3a" stroke-width="0.25">0</text><text x="785.0" y="468.5" text-anchor="middle" font-size="14.2" font-weight="700" fill="#9ccc3a" stroke="#9ccc3a" stroke-width="0.25">0</text><text x="805.4" y="468.5" text-anchor="middle" font-size="14.2" font-weight="700" fill="#9ccc3a" stroke="#9ccc3a" stroke-width="0.25">0</text><text x="825.9" y="468.5" text-anchor="middle" font-size="14.2" font-weight="700" fill="#9ccc3a" stroke="#9ccc3a" stroke-width="0.25">0</text><text x="846.3" y="468.5" text-anchor="middle" font-size="14.2" font-weight="700" fill="#9ccc3a" stroke="#9ccc3a" stroke-width="0.25">0</text><text x="866.7" y="468.5" text-anchor="middle" font-size="14.2" font-weight="700" fill="#9ccc3a" stroke="#9ccc3a" stroke-width="0.25">0</text><text x="887.1" y="468.5" text-anchor="middle" font-size="14.2" font-weight="700" fill="#9ccc3a" stroke="#9ccc3a" stroke-width="0.25">0</text><text x="927.8" y="468.5" text-anchor="middle" font-size="14.2" font-weight="700" fill="#f3a436" stroke="#f3a436" stroke-width="0.25">1</text><text x="948.3" y="468.5" text-anchor="middle" font-size="14.2" font-weight="700" fill="#57a5f0" stroke="#57a5f0" stroke-width="0.25">0</text><text x="968.7" y="468.5" text-anchor="middle" font-size="14.2" font-weight="700" fill="#57a5f0" stroke="#57a5f0" stroke-width="0.25">0</text><text x="989.2" y="468.5" text-anchor="middle" font-size="14.2" font-weight="700" fill="#57a5f0" stroke="#57a5f0" stroke-width="0.25">0</text><text x="1009.6" y="468.5" text-anchor="middle" font-size="14.2" font-weight="700" fill="#57a5f0" stroke="#57a5f0" stroke-width="0.25">0</text><text x="1030.0" y="468.5" text-anchor="middle" font-size="14.2" font-weight="700" fill="#57a5f0" stroke="#57a5f0" stroke-width="0.25">0</text><text x="1050.4" y="468.5" text-anchor="middle" font-size="14.2" font-weight="700" fill="#57a5f0" stroke="#57a5f0" stroke-width="0.25">0</text><text x="1070.8" y="468.5" text-anchor="middle" font-size="14.2" font-weight="700" fill="#57a5f0" stroke="#57a5f0" stroke-width="0.25">0</text><text x="1091.2" y="468.5" text-anchor="middle" font-size="14.2" font-weight="700" fill="#57a5f0" stroke="#57a5f0" stroke-width="0.25">0</text><text x="1131.9" y="468.5" text-anchor="middle" font-size="14.2" font-weight="700" fill="#f3a436" stroke="#f3a436" stroke-width="0.25">1</text><text x="1152.5" y="468.5" text-anchor="middle" font-size="14.2" font-weight="700" fill="#57a5f0" stroke="#57a5f0" stroke-width="0.25">0</text><text x="1172.9" y="468.5" text-anchor="middle" font-size="14.2" font-weight="700" fill="#57a5f0" stroke="#57a5f0" stroke-width="0.25">0</text><text x="1193.3" y="468.5" text-anchor="middle" font-size="14.2" font-weight="700" fill="#57a5f0" stroke="#57a5f0" stroke-width="0.25">0</text><text x="1213.7" y="468.5" text-anchor="middle" font-size="14.2" font-weight="700" fill="#57a5f0" stroke="#57a5f0" stroke-width="0.25">0</text><text x="1234.1" y="468.5" text-anchor="middle" font-size="14.2" font-weight="700" fill="#57a5f0" stroke="#57a5f0" stroke-width="0.25">0</text><text x="1254.5" y="468.5" text-anchor="middle" font-size="14.2" font-weight="700" fill="#57a5f0" stroke="#57a5f0" stroke-width="0.25">0</text><text x="1274.9" y="468.5" text-anchor="middle" font-size="14.2" font-weight="700" fill="#57a5f0" stroke="#57a5f0" stroke-width="0.25">1</text><text x="1295.3" y="468.5" text-anchor="middle" font-size="14.2" font-weight="700" fill="#57a5f0" stroke="#57a5f0" stroke-width="0.25">0</text><text x="1336.1" y="468.5" text-anchor="middle" font-size="14.2" font-weight="700" fill="#f3a436" stroke="#f3a436" stroke-width="0.25">1</text><text x="1356.6" y="468.5" text-anchor="middle" font-size="14.2" font-weight="700" fill="#57a5f0" stroke="#57a5f0" stroke-width="0.25">0</text><text x="1377.0" y="468.5" text-anchor="middle" font-size="14.2" font-weight="700" fill="#57a5f0" stroke="#57a5f0" stroke-width="0.25">0</text><text x="1397.4" y="468.5" text-anchor="middle" font-size="14.2" font-weight="700" fill="#57a5f0" stroke="#57a5f0" stroke-width="0.25">0</text><text x="1417.8" y="468.5" text-anchor="middle" font-size="14.2" font-weight="700" fill="#57a5f0" stroke="#57a5f0" stroke-width="0.25">1</text><text x="1438.2" y="468.5" text-anchor="middle" font-size="14.2" font-weight="700" fill="#57a5f0" stroke="#57a5f0" stroke-width="0.25">0</text><text x="1458.6" y="468.5" text-anchor="middle" font-size="14.2" font-weight="700" fill="#57a5f0" stroke="#57a5f0" stroke-width="0.25">0</text><text x="1479.0" y="468.5" text-anchor="middle" font-size="14.2" font-weight="700" fill="#57a5f0" stroke="#57a5f0" stroke-width="0.25">0</text><text x="1499.5" y="468.5" text-anchor="middle" font-size="14.2" font-weight="700" fill="#57a5f0" stroke="#57a5f0" stroke-width="0.25">0</text><text x="1540.2" y="468.5" text-anchor="middle" font-size="14.2" font-weight="700" fill="#f3a436" stroke="#f3a436" stroke-width="0.25">1</text><text x="1560.7" y="468.5" text-anchor="middle" font-size="14.2" font-weight="700" fill="#57a5f0" stroke="#57a5f0" stroke-width="0.25">0</text><text x="1581.1" y="468.5" text-anchor="middle" font-size="14.2" font-weight="700" fill="#57a5f0" stroke="#57a5f0" stroke-width="0.25">0</text><text x="1601.5" y="468.5" text-anchor="middle" font-size="14.2" font-weight="700" fill="#57a5f0" stroke="#57a5f0" stroke-width="0.25">0</text><text x="1621.9" y="468.5" text-anchor="middle" font-size="14.2" font-weight="700" fill="#57a5f0" stroke="#57a5f0" stroke-width="0.25">1</text><text x="1642.3" y="468.5" text-anchor="middle" font-size="14.2" font-weight="700" fill="#57a5f0" stroke="#57a5f0" stroke-width="0.25">0</text><text x="1662.8" y="468.5" text-anchor="middle" font-size="14.2" font-weight="700" fill="#57a5f0" stroke="#57a5f0" stroke-width="0.25">0</text><text x="1683.2" y="468.5" text-anchor="middle" font-size="14.2" font-weight="700" fill="#57a5f0" stroke="#57a5f0" stroke-width="0.25">0</text><text x="1703.6" y="468.5" text-anchor="middle" font-size="14.2" font-weight="700" fill="#57a5f0" stroke="#57a5f0" stroke-width="0.25">1</text><text x="1744.3" y="468.5" text-anchor="middle" font-size="14.2" font-weight="700" fill="#f3a436" stroke="#f3a436" stroke-width="0.25">1</text><text x="1764.8" y="468.5" text-anchor="middle" font-size="14.2" font-weight="700" fill="#57a5f0" stroke="#57a5f0" stroke-width="0.25">0</text><text x="1785.2" y="468.5" text-anchor="middle" font-size="14.2" font-weight="700" fill="#57a5f0" stroke="#57a5f0" stroke-width="0.25">0</text><text x="1805.6" y="468.5" text-anchor="middle" font-size="14.2" font-weight="700" fill="#57a5f0" stroke="#57a5f0" stroke-width="0.25">0</text><text x="1826.0" y="468.5" text-anchor="middle" font-size="14.2" font-weight="700" fill="#57a5f0" stroke="#57a5f0" stroke-width="0.25">1</text><text x="1846.5" y="468.5" text-anchor="middle" font-size="14.2" font-weight="700" fill="#57a5f0" stroke="#57a5f0" stroke-width="0.25">0</text><path d="M536.79 565.3 L542.69 541.9 H714.60 L720.50 565.3 L714.60 588.7 H542.69 Z M720.50 565.3 L726.40 541.9 H735.01 L740.91 565.3 L735.01 588.7 H726.40 Z M740.91 565.3 L746.81 541.9 H918.72 L924.62 565.3 L918.72 588.7 H746.81 Z M924.62 565.3 L930.52 541.9 H939.13 L945.03 565.3 L939.13 588.7 H930.52 Z M945.03 565.3 L950.93 541.9 H1122.84 L1128.74 565.3 L1122.84 588.7 H950.93 Z M1128.74 565.3 L1134.64 541.9 H1143.25 L1149.15 565.3 L1143.25 588.7 H1134.64 Z M1149.15 565.3 L1155.05 541.9 H1326.96 L1332.86 565.3 L1326.96 588.7 H1155.05 Z M1332.86 565.3 L1338.76 541.9 H1347.37 L1353.27 565.3 L1347.37 588.7 H1338.76 Z M1353.27 565.3 L1359.17 541.9 H1531.08 L1536.98 565.3 L1531.08 588.7 H1359.17 Z M1536.98 565.3 L1542.88 541.9 H1551.49 L1557.39 565.3 L1551.49 588.7 H1542.88 Z M1557.39 565.3 L1563.29 541.9 H1735.20 L1741.10 565.3 L1735.20 588.7 H1563.29 Z M1741.10 565.3 L1747.00 541.9 H1755.61 L1761.51 565.3 L1755.61 588.7 H1747.00 Z M1761.51 565.3 L1767.41 541.9 H1939.32 L1945.22 565.3 L1939.32 588.7 H1767.41 Z " fill="none" stroke="#b48be4" stroke-width="1.55" stroke-linejoin="round"/><text x="730.2" y="570.0" text-anchor="middle" font-size="15.5" fill="#f3a436" stroke="#f3a436" stroke-width="0.45">T</text><text x="934.3" y="570.0" text-anchor="middle" font-size="15.5" fill="#f3a436" stroke="#f3a436" stroke-width="0.45">T</text><text x="1138.4" y="570.0" text-anchor="middle" font-size="15.5" fill="#f3a436" stroke="#f3a436" stroke-width="0.45">T</text><text x="1342.6" y="570.0" text-anchor="middle" font-size="15.5" fill="#f3a436" stroke="#f3a436" stroke-width="0.45">T</text><text x="1546.7" y="570.0" text-anchor="middle" font-size="15.5" fill="#f3a436" stroke="#f3a436" stroke-width="0.45">T</text><text x="1750.8" y="570.0" text-anchor="middle" font-size="15.5" fill="#f3a436" stroke="#f3a436" stroke-width="0.45">T</text><text x="700.4" y="570.2" text-anchor="end" font-size="16" fill="#d4d4d4" stroke="#d4d4d4" stroke-width="0.55" textLength="141.5" lengthAdjust="spacingAndGlyphs">GetPLDMVersion (0×03)</text><text x="832.3" y="570.2" text-anchor="middle" font-size="16" fill="#d4d4d4" stroke="#d4d4d4" stroke-width="0.55" textLength="102.8" lengthAdjust="spacingAndGlyphs">SUCCESS (0×00)</text><text x="1036.3" y="570.2" text-anchor="middle" font-size="16" fill="#d4d4d4" stroke="#d4d4d4" stroke-width="0.55" textLength="178.3" lengthAdjust="spacingAndGlyphs">PLDM Message Payloa.(0×00)</text><text x="1240.4" y="570.2" text-anchor="middle" font-size="16" fill="#d4d4d4" stroke="#d4d4d4" stroke-width="0.55" textLength="178.3" lengthAdjust="spacingAndGlyphs">PLDM Message Payloa.(0×02)</text><text x="1444.7" y="570.2" text-anchor="middle" font-size="16" fill="#d4d4d4" stroke="#d4d4d4" stroke-width="0.55" textLength="177.8" lengthAdjust="spacingAndGlyphs">PLDM Message Payloa.(0×10)</text><text x="1648.2" y="570.2" text-anchor="middle" font-size="16" fill="#d4d4d4" stroke="#d4d4d4" stroke-width="0.55" textLength="184.0" lengthAdjust="spacingAndGlyphs">PLDM Message Payload (0×11)</text><text x="1763.6" y="570.2" text-anchor="start" font-size="16" fill="#d4d4d4" stroke="#d4d4d4" stroke-width="0.55" textLength="178.3" lengthAdjust="spacingAndGlyphs">PLDM Message Payloa.(0×10)</text><text x="749.9" y="600.8" text-anchor="middle" font-size="12.2" fill="#9c9c9c" textLength="40.4" lengthAdjust="spacingAndGlyphs">11.825s</text><text x="871.5" y="600.8" text-anchor="middle" font-size="12.2" fill="#9c9c9c" textLength="40.4" lengthAdjust="spacingAndGlyphs">11.825s</text><text x="993.0" y="600.8" text-anchor="middle" font-size="12.2" fill="#9c9c9c" textLength="40.4" lengthAdjust="spacingAndGlyphs">11.825s</text><text x="1114.5" y="600.8" text-anchor="middle" font-size="12.2" fill="#9c9c9c" textLength="40.4" lengthAdjust="spacingAndGlyphs">11.825s</text><text x="1236.1" y="600.8" text-anchor="middle" font-size="12.2" fill="#9c9c9c" textLength="40.4" lengthAdjust="spacingAndGlyphs">11.825s</text><text x="1357.7" y="600.8" text-anchor="middle" font-size="12.2" fill="#9c9c9c" textLength="40.4" lengthAdjust="spacingAndGlyphs">11.825s</text><text x="1479.2" y="600.8" text-anchor="middle" font-size="12.2" fill="#9c9c9c" textLength="40.4" lengthAdjust="spacingAndGlyphs">11.825s</text><text x="1600.8" y="600.8" text-anchor="middle" font-size="12.2" fill="#9c9c9c" textLength="40.4" lengthAdjust="spacingAndGlyphs">11.825s</text><text x="1722.3" y="600.8" text-anchor="middle" font-size="12.2" fill="#9c9c9c" textLength="40.4" lengthAdjust="spacingAndGlyphs">11.825s</text></svg><div style="position:absolute;left:1850.2px;top:255.2px;width:47.7px;height:350px;background:#000;border:1px solid #6e6e6e;box-sizing:border-box"></div><svg style="position:absolute;left:1852px;top:258px" width="44" height="344" viewBox="1852 258 44 344" fill="none" stroke="#e6e6e6" stroke-width="1.15" stroke-linecap="round" stroke-linejoin="round"><rect x="1868.1" y="268.1" width="11.5" height="16.6" rx="5.75"/><path d="M1873.9 271.6 V275.2" stroke-width="1.5"/><circle cx="1871" cy="310.8" r="7.1" stroke-width="1.3"/><path d="M1876.2 316 L1884 323.7" stroke-width="1.3"/><path d="M1867.6 310.8 H1874.4 M1871 307.4 V314.2" stroke-width="1.3"/><circle cx="1871" cy="349.8" r="7.1" stroke-width="1.3"/><path d="M1876.2 355 L1884 362.9" stroke-width="1.3"/><path d="M1867.6 349.8 H1874.4" stroke-width="1.3"/><path d="M1870.6 392.5 V386.2 M1873.2 391.8 V384.6 M1875.8 391.8 V385.2 M1878.4 392.6 V387 M1878.4 387 q1.6 0 1.6 1.8 V396.5 q0 4.2 -4 4.2 h-2.6 q-2.4 0 -3.6 -1.8 l-5.2 -7.6 q1.6 -1.4 3.2 0.4 l2.6 2.9 V392"/><circle cx="1873.7" cy="431" r="1.5"/><path d="M1873.7 427.4 V423.4 M1871.5 425.4 L1873.7 423.2 L1875.9 425.4 M1873.7 434.6 V438.6 M1871.5 436.6 L1873.7 438.8 L1875.9 436.6 M1870.1000000000001 431 H1866.1000000000001 M1868.1000000000001 428.8 L1865.9 431 L1868.1000000000001 433.2 M1877.3 431 H1881.3 M1879.3 428.8 L1881.5 431 L1879.3 433.2"/><path d="M1867.7 462.2 V475.6 M1880.7 462.2 V475.6"/><rect x="1870.9" y="462.6" width="6.6" height="12.6"/><path d="M1869.3 500.6 V515.4 M1873.7 500.6 V515.4 M1878.1 500.6 V515.4 M1866.2 503.5 H1881.2 M1866.2 508 H1881.2 M1866.2 512.5 H1881.2" stroke-width="1.1"/><path d="M1866.4 547.6 L1871.6 542.6 L1875.2 545.6 L1881.4 540.4"/><path d="M1869.8 553.8 V550.4 M1873.4 553.8 V548.4 M1877 553.8 V549.6 M1880.8 553.8 V545.4" stroke-width="1.4" stroke-linecap="butt"/><path d="M1866.4 553.4 V553.9" stroke-width="1.2"/><path d="M1866.4 580.6 H1870.4 L1871.6 578.4 H1876.4 L1877.6 580.6 H1881.6 V591.4 H1866.4 Z"/><circle cx="1874" cy="585.8" r="2.9"/></svg><div style="position:absolute;left:541.3px;top:624px;width:677px;height:436.6px;background:#000;border:1px solid #3c3c3c;border-radius:10px;box-sizing:border-box"></div><div style="position:absolute;left:559px;top:635px;width:643px;height:47.6px;background:#5a5a5a;border-radius:8px;box-shadow:0 0 6px 1px rgba(200,200,200,.2)"></div><span style="position:absolute;left:581.60px;top:649.25px;line-height:22px;font-size:17px;color:#fff;white-space:pre;letter-spacing:0.510px;">Decoded Result</span><svg style="position:absolute;left:968px;top:646px" width="24" height="26" viewBox="968 646 24 26" fill="none" stroke="#fff" stroke-width="2.2">
<path d="M985.6 653.6 A7.4 7.4 0 1 0 987.3 660.8"/><path d="M988.6 649.2 V656.6 H981.2 Z" fill="#fff" stroke="none"/></svg><span style="position:absolute;left:1001.80px;top:647.65px;line-height:22px;font-size:17px;color:#fff;white-space:pre;letter-spacing:0.270px;-webkit-text-stroke:0.3px #fff;">Reset</span><svg style="position:absolute;left:1070.5px;top:643px" width="32" height="32" viewBox="1070.5 643 32 32" fill="none" stroke="#fff" stroke-width="1.9" stroke-linecap="round" stroke-linejoin="round">
<circle cx="1086.5" cy="659.2" r="12.4"/><path d="M1079.9 659 H1093.1 M1085.1 653.8 L1079.9 659 L1085.1 664.2"/></svg><svg style="position:absolute;left:1112.8px;top:643px" width="32" height="32" viewBox="1112.8 643 32 32" fill="none" stroke="#fff" stroke-width="1.9" stroke-linecap="round" stroke-linejoin="round">
<circle cx="1128.8" cy="659.2" r="12.4"/><path d="M1122.2 659 H1135.3999999999999 M1130.2 653.8 L1135.3999999999999 659 L1130.2 664.2"/></svg><svg style="position:absolute;left:1160px;top:647px" width="24" height="24" viewBox="1160 647 24 24" fill="none" stroke="#fff" stroke-width="1.7" stroke-linecap="round">
<circle cx="1171.0" cy="657.4" r="6.7"/><path d="M1176.0 662.4 L1179.6 666.0"/></svg><div style="position:absolute;left:549px;top:693px;width:663px;height:365px;border:1px solid #565656;border-radius:9px;box-sizing:border-box;overflow:hidden"><div style="position:absolute;left:-1px;top:-1px"><div style="position:absolute;left:0px;top:0px;width:663px;height:365px;"></div><div style="position:absolute;left:0px;top:135.04000000000008px;width:653.2px;height:31.28px;background:#3e2d0c"></div><div style="position:absolute;left:0px;top:197.60000000000002px;width:653.2px;height:31.28px;background:#3e2d0c"></div><div style="position:absolute;left:0px;top:32.200000000000045px;width:653.2px;height:1px;background:#565656"></div><div style="position:absolute;left:0px;top:40.700000000000045px;width:653.2px;height:1px;background:#565656"></div><div style="position:absolute;left:0px;top:71.98000000000002px;width:653.2px;height:1px;background:#565656"></div><div style="position:absolute;left:0px;top:103.25999999999999px;width:653.2px;height:1px;background:#565656"></div><div style="position:absolute;left:0px;top:134.54000000000008px;width:653.2px;height:1px;background:#565656"></div><div style="position:absolute;left:0px;top:165.82000000000005px;width:653.2px;height:1px;background:#565656"></div><div style="position:absolute;left:0px;top:197.10000000000002px;width:653.2px;height:1px;background:#565656"></div><div style="position:absolute;left:0px;top:228.3800000000001px;width:653.2px;height:1px;background:#565656"></div><div style="position:absolute;left:0px;top:259.6600000000001px;width:653.2px;height:1px;background:#565656"></div><div style="position:absolute;left:0px;top:290.94000000000005px;width:653.2px;height:1px;background:#565656"></div><div style="position:absolute;left:0px;top:322.22px;width:653.2px;height:1px;background:#565656"></div><div style="position:absolute;left:0px;top:353.5px;width:653.2px;height:1px;background:#565656"></div><div style="position:absolute;left:51.10000000000002px;top:0px;width:1px;height:354px;background:#565656"></div><div style="position:absolute;left:162.79999999999995px;top:0px;width:1px;height:354px;background:#565656"></div><div style="position:absolute;left:377.70000000000005px;top:0px;width:1px;height:354px;background:#565656"></div><div style="position:absolute;left:566.0px;top:0px;width:1px;height:354px;background:#565656"></div><div style="position:absolute;left:653.2px;top:32.700000000000045px;width:9.3px;height:322px;background:#242424"></div><div style="position:absolute;left:654.2px;top:54px;width:7.6px;height:300.6px;background:#1a7fc6;border-radius:4px"></div><div style="position:absolute;left:0px;top:358.20000000000005px;width:657px;height:6px;background:#262626;border-radius:3px"></div><div style="position:absolute;left:0px;top:358.20000000000005px;width:618px;height:6px;background:#1a7fc6;border-radius:3px"></div></div></div><span style="position:absolute;left:565.60px;top:699.15px;line-height:23px;font-size:18px;color:#1d86d0;white-space:pre;letter-spacing:-0.708px;">S..</span><span style="position:absolute;left:616.00px;top:699.15px;line-height:23px;font-size:18px;color:#1d86d0;white-space:pre;letter-spacing:0.407px;">StartTime</span><span style="position:absolute;left:774.80px;top:699.15px;line-height:23px;font-size:18px;color:#1d86d0;white-space:pre;letter-spacing:-0.041px;">FrameType</span><span style="position:absolute;left:952.60px;top:699.15px;line-height:23px;font-size:18px;color:#1d86d0;white-space:pre;letter-spacing:0.168px;">Command Name</span><span style="position:absolute;left:1130.90px;top:699.15px;line-height:23px;font-size:18px;color:#1d86d0;white-space:pre;letter-spacing:-0.064px;">Error ...</span><div style="position:absolute;left:811px;top:726.2px;width:9px;height:1.2px;background:#8a8a8a"></div><span style="position:absolute;left:565.60px;top:739.45px;line-height:23px;font-size:18px;color:#d3d3d3;white-space:pre;">1</span><span style="position:absolute;left:616.00px;top:739.45px;line-height:23px;font-size:18px;color:#d3d3d3;white-space:pre;letter-spacing:0.642px;">44.732...</span><span style="position:absolute;left:728.00px;top:739.45px;line-height:23px;font-size:18px;color:#d3d3d3;white-space:pre;letter-spacing:-0.125px;">Broadcast_ENTDAA</span><span style="position:absolute;left:1130.90px;top:739.45px;line-height:23px;font-size:18px;color:#d3d3d3;white-space:pre;letter-spacing:0.090px;">None</span><span style="position:absolute;left:565.60px;top:770.76px;line-height:23px;font-size:18px;color:#d3d3d3;white-space:pre;">2</span><span style="position:absolute;left:616.00px;top:770.76px;line-height:23px;font-size:18px;color:#d3d3d3;white-space:pre;letter-spacing:0.990px;">8.4870s</span><span style="position:absolute;left:728.00px;top:770.76px;line-height:23px;font-size:18px;color:#d3d3d3;white-space:pre;letter-spacing:-0.265px;">PLDM_over_MCTP</span><span style="position:absolute;left:943.30px;top:770.76px;line-height:23px;font-size:18px;color:#d3d3d3;white-space:pre;letter-spacing:0.080px;">GetPLDMVersion</span><span style="position:absolute;left:1130.90px;top:770.76px;line-height:23px;font-size:18px;color:#d3d3d3;white-space:pre;letter-spacing:0.090px;">None</span><span style="position:absolute;left:565.60px;top:802.07px;line-height:23px;font-size:18px;color:#d3d3d3;white-space:pre;">3</span><span style="position:absolute;left:616.00px;top:802.07px;line-height:23px;font-size:18px;color:#d3d3d3;white-space:pre;letter-spacing:1.209px;">11.8247s</span><span style="position:absolute;left:728.00px;top:802.07px;line-height:23px;font-size:18px;color:#d3d3d3;white-space:pre;letter-spacing:-0.808px;">IBI</span><span style="position:absolute;left:1130.90px;top:802.07px;line-height:23px;font-size:18px;color:#d3d3d3;white-space:pre;letter-spacing:0.090px;">None</span><span style="position:absolute;left:565.60px;top:833.38px;line-height:23px;font-size:18px;color:#d3d3d3;white-space:pre;">4</span><span style="position:absolute;left:616.00px;top:833.38px;line-height:23px;font-size:18px;color:#d3d3d3;white-space:pre;letter-spacing:1.209px;">11.8247s</span><span style="position:absolute;left:728.00px;top:833.38px;line-height:23px;font-size:18px;color:#d3d3d3;white-space:pre;letter-spacing:-0.265px;">PLDM_over_MCTP</span><span style="position:absolute;left:943.30px;top:833.38px;line-height:23px;font-size:18px;color:#d3d3d3;white-space:pre;letter-spacing:0.080px;">GetPLDMVersion</span><span style="position:absolute;left:1130.90px;top:833.38px;line-height:23px;font-size:18px;color:#d3d3d3;white-space:pre;letter-spacing:0.090px;">None</span><span style="position:absolute;left:565.60px;top:864.69px;line-height:23px;font-size:18px;color:#d3d3d3;white-space:pre;">5</span><span style="position:absolute;left:616.00px;top:864.69px;line-height:23px;font-size:18px;color:#d3d3d3;white-space:pre;letter-spacing:1.017px;">44.3169s</span><span style="position:absolute;left:728.00px;top:864.69px;line-height:23px;font-size:18px;color:#d3d3d3;white-space:pre;letter-spacing:-0.265px;">PLDM_over_MCTP</span><span style="position:absolute;left:943.30px;top:864.69px;line-height:23px;font-size:18px;color:#d3d3d3;white-space:pre;letter-spacing:-0.183px;">GetTID</span><span style="position:absolute;left:1130.90px;top:864.69px;line-height:23px;font-size:18px;color:#d3d3d3;white-space:pre;letter-spacing:0.090px;">None</span><span style="position:absolute;left:565.60px;top:896.00px;line-height:23px;font-size:18px;color:#d3d3d3;white-space:pre;">6</span><span style="position:absolute;left:616.00px;top:896.00px;line-height:23px;font-size:18px;color:#d3d3d3;white-space:pre;letter-spacing:1.017px;">47.6526s</span><span style="position:absolute;left:728.00px;top:896.00px;line-height:23px;font-size:18px;color:#d3d3d3;white-space:pre;letter-spacing:-0.808px;">IBI</span><span style="position:absolute;left:1130.90px;top:896.00px;line-height:23px;font-size:18px;color:#d3d3d3;white-space:pre;letter-spacing:0.090px;">None</span><span style="position:absolute;left:565.60px;top:927.31px;line-height:23px;font-size:18px;color:#d3d3d3;white-space:pre;">7</span><span style="position:absolute;left:616.00px;top:927.31px;line-height:23px;font-size:18px;color:#d3d3d3;white-space:pre;letter-spacing:1.017px;">47.6526s</span><span style="position:absolute;left:728.00px;top:927.31px;line-height:23px;font-size:18px;color:#d3d3d3;white-space:pre;letter-spacing:-0.265px;">PLDM_over_MCTP</span><span style="position:absolute;left:943.30px;top:927.31px;line-height:23px;font-size:18px;color:#d3d3d3;white-space:pre;letter-spacing:-0.183px;">GetTID</span><span style="position:absolute;left:1130.90px;top:927.31px;line-height:23px;font-size:18px;color:#d3d3d3;white-space:pre;letter-spacing:0.090px;">None</span><span style="position:absolute;left:565.60px;top:958.62px;line-height:23px;font-size:18px;color:#d3d3d3;white-space:pre;">8</span><span style="position:absolute;left:616.00px;top:958.62px;line-height:23px;font-size:18px;color:#d3d3d3;white-space:pre;letter-spacing:1.017px;">60.9387s</span><span style="position:absolute;left:728.00px;top:958.62px;line-height:23px;font-size:18px;color:#d3d3d3;white-space:pre;letter-spacing:-0.265px;">PLDM_over_MCTP</span><span style="position:absolute;left:943.30px;top:958.62px;line-height:23px;font-size:18px;color:#d3d3d3;white-space:pre;letter-spacing:-0.183px;">SetTID</span><span style="position:absolute;left:1130.90px;top:958.62px;line-height:23px;font-size:18px;color:#d3d3d3;white-space:pre;letter-spacing:0.090px;">None</span><span style="position:absolute;left:565.60px;top:989.93px;line-height:23px;font-size:18px;color:#d3d3d3;white-space:pre;">9</span><span style="position:absolute;left:616.00px;top:989.93px;line-height:23px;font-size:18px;color:#d3d3d3;white-space:pre;letter-spacing:1.017px;">67.2054s</span><span style="position:absolute;left:728.00px;top:989.93px;line-height:23px;font-size:18px;color:#d3d3d3;white-space:pre;letter-spacing:-0.808px;">IBI</span><span style="position:absolute;left:1130.90px;top:989.93px;line-height:23px;font-size:18px;color:#d3d3d3;white-space:pre;letter-spacing:0.090px;">None</span><span style="position:absolute;left:565.60px;top:1021.24px;line-height:23px;font-size:18px;color:#d3d3d3;white-space:pre;letter-spacing:-0.339px;">1...</span><span style="position:absolute;left:616.00px;top:1021.24px;line-height:23px;font-size:18px;color:#d3d3d3;white-space:pre;letter-spacing:1.017px;">67.2054s</span><span style="position:absolute;left:728.00px;top:1021.24px;line-height:23px;font-size:18px;color:#d3d3d3;white-space:pre;letter-spacing:-0.265px;">PLDM_over_MCTP</span><span style="position:absolute;left:943.30px;top:1021.24px;line-height:23px;font-size:18px;color:#d3d3d3;white-space:pre;letter-spacing:-0.183px;">SetTID</span><span style="position:absolute;left:1130.90px;top:1021.24px;line-height:23px;font-size:18px;color:#d3d3d3;white-space:pre;letter-spacing:0.090px;">None</span><div style="position:absolute;left:1228px;top:624px;width:676.3px;height:436.6px;background:#000;border:1px solid #3c3c3c;border-radius:10px;box-sizing:border-box"></div><div style="position:absolute;left:1245px;top:635px;width:643px;height:45.6px;background:#5a5a5a;border-radius:8px;box-shadow:0 0 6px 1px rgba(200,200,200,.2)"></div><span style="position:absolute;left:1268.40px;top:648.25px;line-height:22px;font-size:17px;color:#fff;white-space:pre;letter-spacing:0.463px;">Selected Frame View</span><div style="position:absolute;left:1235px;top:691px;width:663px;height:365.5999999999999px;border:1px solid #565656;border-bottom-color:#2d5f8a;border-radius:9px;box-sizing:border-box;overflow:hidden"><div style="position:absolute;left:-1px;top:-1px"><div style="position:absolute;left:0px;top:345.9000000000001px;width:657.5999999999999px;height:31.24px;background:#3e2d0c"></div><div style="position:absolute;left:0px;top:33.0px;width:665px;height:1px;background:#565656"></div><div style="position:absolute;left:0px;top:64.24000000000001px;width:657.5999999999999px;height:1px;background:#565656"></div><div style="position:absolute;left:0px;top:95.48000000000002px;width:657.5999999999999px;height:1px;background:#565656"></div><div style="position:absolute;left:0px;top:126.72000000000003px;width:657.5999999999999px;height:1px;background:#565656"></div><div style="position:absolute;left:0px;top:157.96000000000004px;width:657.5999999999999px;height:1px;background:#565656"></div><div style="position:absolute;left:0px;top:189.20000000000005px;width:657.5999999999999px;height:1px;background:#565656"></div><div style="position:absolute;left:0px;top:220.44000000000005px;width:657.5999999999999px;height:1px;background:#565656"></div><div style="position:absolute;left:0px;top:251.67999999999995px;width:657.5999999999999px;height:1px;background:#565656"></div><div style="position:absolute;left:0px;top:282.91999999999996px;width:657.5999999999999px;height:1px;background:#565656"></div><div style="position:absolute;left:0px;top:314.15999999999997px;width:657.5999999999999px;height:1px;background:#565656"></div><div style="position:absolute;left:0px;top:345.4000000000001px;width:657.5999999999999px;height:1px;background:#565656"></div><div style="position:absolute;left:0px;top:376.6399999999999px;width:657.5999999999999px;height:1px;background:#565656"></div><div style="position:absolute;left:111.90000000000009px;top:0px;width:1px;height:365.5999999999999px;background:#565656"></div><div style="position:absolute;left:383.70000000000005px;top:0px;width:1px;height:365.5999999999999px;background:#565656"></div><div style="position:absolute;left:464.70000000000005px;top:0px;width:1px;height:365.5999999999999px;background:#565656"></div><div style="position:absolute;left:564.7px;top:0px;width:1px;height:365.5999999999999px;background:#565656"></div><div style="position:absolute;left:657.5999999999999px;top:33.5px;width:4.8px;height:340px;background:#242424"></div><div style="position:absolute;left:657.8px;top:146.79999999999995px;width:4.4px;height:98px;background:#1a7fc6;border-radius:2px"></div><div style="position:absolute;left:7px;top:364px;width:480px;height:1.3px;background:#2a7fc0"></div><span style="position:absolute;left:17.40px;top:37.65px;line-height:23px;font-size:18px;color:#d3d3d3;white-space:pre;letter-spacing:1.009px;">11.8248s</span><span style="position:absolute;left:128.60px;top:37.65px;line-height:23px;font-size:18px;color:#d3d3d3;white-space:pre;letter-spacing:-0.008px;">Msg_Tag</span><span style="position:absolute;left:400.20px;top:37.65px;line-height:23px;font-size:18px;color:#d3d3d3;white-space:pre;letter-spacing:1.227px;">0×0</span><span style="position:absolute;left:481.80px;top:37.65px;line-height:23px;font-size:18px;color:#d3d3d3;white-space:pre;letter-spacing:0.354px;">Target</span><span style="position:absolute;left:581.80px;top:37.65px;line-height:23px;font-size:18px;color:#d3d3d3;white-space:pre;letter-spacing:0.561px;">3.13MHz</span><span style="position:absolute;left:17.40px;top:68.89px;line-height:23px;font-size:18px;color:#d3d3d3;white-space:pre;letter-spacing:1.009px;">11.8248s</span><span style="position:absolute;left:128.60px;top:68.89px;line-height:23px;font-size:18px;color:#d3d3d3;white-space:pre;letter-spacing:-1.000px;">IC</span><span style="position:absolute;left:400.20px;top:68.89px;line-height:23px;font-size:18px;color:#d3d3d3;white-space:pre;letter-spacing:1.227px;">0×0</span><span style="position:absolute;left:481.80px;top:68.89px;line-height:23px;font-size:18px;color:#d3d3d3;white-space:pre;letter-spacing:0.354px;">Target</span><span style="position:absolute;left:581.80px;top:68.89px;line-height:23px;font-size:18px;color:#d3d3d3;white-space:pre;letter-spacing:0.561px;">3.13MHz</span><span style="position:absolute;left:17.40px;top:100.13px;line-height:23px;font-size:18px;color:#d3d3d3;white-space:pre;letter-spacing:1.009px;">11.8248s</span><span style="position:absolute;left:128.60px;top:100.13px;line-height:23px;font-size:18px;color:#d3d3d3;white-space:pre;letter-spacing:-0.007px;">Msg_Type</span><span style="position:absolute;left:400.20px;top:100.13px;line-height:23px;font-size:18px;color:#d3d3d3;white-space:pre;letter-spacing:1.227px;">0×1</span><span style="position:absolute;left:481.80px;top:100.13px;line-height:23px;font-size:18px;color:#d3d3d3;white-space:pre;letter-spacing:0.354px;">Target</span><span style="position:absolute;left:581.80px;top:100.13px;line-height:23px;font-size:18px;color:#d3d3d3;white-space:pre;letter-spacing:0.561px;">3.13MHz</span><span style="position:absolute;left:17.40px;top:131.37px;line-height:23px;font-size:18px;color:#d3d3d3;white-space:pre;letter-spacing:1.009px;">11.8248s</span><span style="position:absolute;left:128.60px;top:131.37px;line-height:23px;font-size:18px;color:#d3d3d3;white-space:pre;letter-spacing:-1.616px;">Rq</span><span style="position:absolute;left:400.20px;top:131.37px;line-height:23px;font-size:18px;color:#d3d3d3;white-space:pre;letter-spacing:1.227px;">0×0</span><span style="position:absolute;left:481.80px;top:131.37px;line-height:23px;font-size:18px;color:#d3d3d3;white-space:pre;letter-spacing:0.354px;">Target</span><span style="position:absolute;left:581.80px;top:131.37px;line-height:23px;font-size:18px;color:#d3d3d3;white-space:pre;letter-spacing:0.561px;">3.13MHz</span><span style="position:absolute;left:17.40px;top:162.61px;line-height:23px;font-size:18px;color:#d3d3d3;white-space:pre;letter-spacing:1.009px;">11.8248s</span><span style="position:absolute;left:128.60px;top:162.61px;line-height:23px;font-size:18px;color:#d3d3d3;white-space:pre;">D</span><span style="position:absolute;left:400.20px;top:162.61px;line-height:23px;font-size:18px;color:#d3d3d3;white-space:pre;letter-spacing:1.227px;">0×0</span><span style="position:absolute;left:481.80px;top:162.61px;line-height:23px;font-size:18px;color:#d3d3d3;white-space:pre;letter-spacing:0.354px;">Target</span><span style="position:absolute;left:581.80px;top:162.61px;line-height:23px;font-size:18px;color:#d3d3d3;white-space:pre;letter-spacing:0.561px;">3.13MHz</span><span style="position:absolute;left:17.40px;top:193.85px;line-height:23px;font-size:18px;color:#d3d3d3;white-space:pre;letter-spacing:1.009px;">11.8248s</span><span style="position:absolute;left:128.60px;top:193.85px;line-height:23px;font-size:18px;color:#d3d3d3;white-space:pre;letter-spacing:0.328px;">rsvd</span><span style="position:absolute;left:400.20px;top:193.85px;line-height:23px;font-size:18px;color:#d3d3d3;white-space:pre;letter-spacing:1.227px;">0×0</span><span style="position:absolute;left:481.80px;top:193.85px;line-height:23px;font-size:18px;color:#d3d3d3;white-space:pre;letter-spacing:0.354px;">Target</span><span style="position:absolute;left:581.80px;top:193.85px;line-height:23px;font-size:18px;color:#d3d3d3;white-space:pre;letter-spacing:0.561px;">3.13MHz</span><span style="position:absolute;left:17.40px;top:225.09px;line-height:23px;font-size:18px;color:#d3d3d3;white-space:pre;letter-spacing:1.009px;">11.8248s</span><span style="position:absolute;left:128.60px;top:225.09px;line-height:23px;font-size:18px;color:#d3d3d3;white-space:pre;letter-spacing:0.075px;">Instance ID</span><span style="position:absolute;left:400.20px;top:225.09px;line-height:23px;font-size:18px;color:#d3d3d3;white-space:pre;letter-spacing:1.218px;">0×10</span><span style="position:absolute;left:481.80px;top:225.09px;line-height:23px;font-size:18px;color:#d3d3d3;white-space:pre;letter-spacing:0.354px;">Target</span><span style="position:absolute;left:581.80px;top:225.09px;line-height:23px;font-size:18px;color:#d3d3d3;white-space:pre;letter-spacing:0.561px;">3.13MHz</span><span style="position:absolute;left:17.40px;top:256.33px;line-height:23px;font-size:18px;color:#d3d3d3;white-space:pre;letter-spacing:1.009px;">11.8248s</span><span style="position:absolute;left:128.60px;top:256.33px;line-height:23px;font-size:18px;color:#d3d3d3;white-space:pre;letter-spacing:0.195px;">Hdr Ver</span><span style="position:absolute;left:400.20px;top:256.33px;line-height:23px;font-size:18px;color:#d3d3d3;white-space:pre;letter-spacing:1.227px;">0×0</span><span style="position:absolute;left:481.80px;top:256.33px;line-height:23px;font-size:18px;color:#d3d3d3;white-space:pre;letter-spacing:0.354px;">Target</span><span style="position:absolute;left:581.80px;top:256.33px;line-height:23px;font-size:18px;color:#d3d3d3;white-space:pre;letter-spacing:0.561px;">3.13MHz</span><span style="position:absolute;left:17.40px;top:287.57px;line-height:23px;font-size:18px;color:#d3d3d3;white-space:pre;letter-spacing:1.009px;">11.8248s</span><span style="position:absolute;left:128.60px;top:287.57px;line-height:23px;font-size:18px;color:#d3d3d3;white-space:pre;letter-spacing:-0.306px;">PLDM_Type</span><span style="position:absolute;left:400.20px;top:287.57px;line-height:23px;font-size:18px;color:#d3d3d3;white-space:pre;letter-spacing:1.227px;">0×4</span><span style="position:absolute;left:481.80px;top:287.57px;line-height:23px;font-size:18px;color:#d3d3d3;white-space:pre;letter-spacing:0.354px;">Target</span><span style="position:absolute;left:581.80px;top:287.57px;line-height:23px;font-size:18px;color:#d3d3d3;white-space:pre;letter-spacing:0.561px;">3.13MHz</span><span style="position:absolute;left:17.40px;top:318.81px;line-height:23px;font-size:18px;color:#d3d3d3;white-space:pre;letter-spacing:1.009px;">11.8248s</span><span style="position:absolute;left:128.60px;top:318.81px;line-height:23px;font-size:18px;color:#d3d3d3;white-space:pre;letter-spacing:-0.206px;">PLDM_Command_Code</span><span style="position:absolute;left:400.20px;top:318.81px;line-height:23px;font-size:18px;color:#d3d3d3;white-space:pre;letter-spacing:1.227px;">0×3</span><span style="position:absolute;left:481.80px;top:318.81px;line-height:23px;font-size:18px;color:#d3d3d3;white-space:pre;letter-spacing:0.354px;">Target</span><span style="position:absolute;left:581.80px;top:318.81px;line-height:23px;font-size:18px;color:#d3d3d3;white-space:pre;letter-spacing:0.561px;">3.13MHz</span><span style="position:absolute;left:17.40px;top:350.05px;line-height:23px;font-size:18px;color:#d3d3d3;white-space:pre;letter-spacing:1.009px;">11.8248s</span><span style="position:absolute;left:128.60px;top:350.05px;line-height:23px;font-size:18px;color:#d3d3d3;white-space:pre;letter-spacing:-0.090px;">PLDM_Completion_Code</span><span style="position:absolute;left:400.20px;top:350.05px;line-height:23px;font-size:18px;color:#d3d3d3;white-space:pre;letter-spacing:1.227px;">0×0</span><span style="position:absolute;left:481.80px;top:350.05px;line-height:23px;font-size:18px;color:#d3d3d3;white-space:pre;letter-spacing:0.354px;">Target</span><span style="position:absolute;left:581.80px;top:350.05px;line-height:23px;font-size:18px;color:#d3d3d3;white-space:pre;letter-spacing:0.561px;">3.13MHz</span><span style="position:absolute;left:36.60px;top:7.35px;line-height:23px;font-size:18px;color:#1d86d0;white-space:pre;letter-spacing:0.352px;">Time</span><span style="position:absolute;left:200.70px;top:7.35px;line-height:23px;font-size:18px;color:#1d86d0;white-space:pre;letter-spacing:0.215px;">PacketType</span><span style="position:absolute;left:402.30px;top:7.35px;line-height:23px;font-size:18px;color:#1d86d0;white-space:pre;">Value</span><span style="position:absolute;left:496.30px;top:7.35px;line-height:23px;font-size:18px;color:#1d86d0;white-space:pre;letter-spacing:0.295px;">Host</span><span style="position:absolute;left:581.80px;top:7.35px;line-height:23px;font-size:18px;color:#1d86d0;white-space:pre;letter-spacing:0.569px;">Frequency</span></div></div><div style="position:absolute;left:0px;top:1077px;width:1918px;height:57.6px;background:#464646"></div><div style="position:absolute;left:0px;top:1134.6px;width:1918px;height:4.8px;background:#000"></div><div style="position:absolute;left:0px;top:1139.4px;width:1918px;height:1.6px;background:#f4f4f4"></div><div style="position:absolute;left:1px;top:1077.5px;width:137.9px;height:45.2px;background:#000;border-radius:0 0 9px 9px"></div><span style="position:absolute;left:21.20px;top:1090.25px;line-height:20px;font-size:15px;color:#fff;white-space:pre;font-weight:700;letter-spacing:-0.588px;">Exerciser View</span><div style="position:absolute;left:143px;top:1077.5px;width:116px;height:45.2px;background:#000;border-radius:0 0 9px 9px"></div><span style="position:absolute;left:163.70px;top:1090.25px;line-height:20px;font-size:15px;color:#fff;white-space:pre;font-weight:700;letter-spacing:-0.461px;">Setup View</span><div style="position:absolute;left:262.8px;top:1077.5px;width:103.0px;height:45.2px;background:#000;border-radius:0 0 9px 9px"></div><span style="position:absolute;left:283.40px;top:1090.25px;line-height:20px;font-size:15px;color:#fff;white-space:pre;font-weight:700;letter-spacing:-0.478px;">Plot View</span><div style="position:absolute;left:370px;top:1077.5px;width:136.8px;height:45.2px;background:#000;border-radius:0 0 9px 9px"></div><span style="position:absolute;left:390.80px;top:1090.25px;line-height:20px;font-size:15px;color:#fff;white-space:pre;font-weight:700;letter-spacing:-0.467px;">Decoded View</span><div style="position:absolute;left:511.2px;top:1077.5px;width:181.8px;height:45.2px;background:#000;border-radius:0 0 9px 9px"></div><span style="position:absolute;left:531.60px;top:1090.25px;line-height:20px;font-size:15px;color:#fff;white-space:pre;font-weight:700;letter-spacing:-0.432px;">Selected Frame View</span><div style="position:absolute;left:719.9px;top:1083px;width:1200px;height:45.2px;background:#2a2a2a;border:1px solid #2e4a63;border-radius:9px 0 0 9px;box-sizing:border-box"></div><div style="position:absolute;left:1914.3px;top:1084px;width:3.7px;height:38px;background:#5c5c5c;border-radius:2px"></div><div style="position:absolute;left:872.4px;top:1092px;width:57.200000000000045px;height:1px;background:#6a6a6a"></div><div style="position:absolute;left:970.4px;top:1092px;width:58.19999999999993px;height:1px;background:#6a6a6a"></div><div style="position:absolute;left:1069px;top:1092px;width:77.90000000000009px;height:1px;background:#6a6a6a"></div><div style="position:absolute;left:1186.6px;top:1092px;width:84.30000000000018px;height:1px;background:#6a6a6a"></div><div style="position:absolute;left:1310.3px;top:1092px;width:66.10000000000014px;height:1px;background:#6a6a6a"></div><div style="position:absolute;left:1416px;top:1092px;width:58px;height:1px;background:#6a6a6a"></div><svg style="position:absolute;left:830px;top:1083px" width="690" height="26" viewBox="830 1083 690 26"><circle cx="851.7" cy="1096.1" r="9.9" fill="#0d5cc6"/><circle cx="949.7" cy="1096.1" r="9.9" fill="#0d5cc6"/><circle cx="949.7" cy="1096.1" r="6.5" fill="#5dd67c"/><path d="M946.5 1096.3 L948.7 1098.5 L953.0 1094.0" fill="none" stroke="#0c4fb4" stroke-width="1.3"/><circle cx="1048.6" cy="1096.1" r="9.9" fill="#0d5cc6"/><circle cx="1048.6" cy="1096.1" r="6.5" fill="#5dd67c"/><path d="M1045.3999999999999 1096.3 L1047.6 1098.5 L1051.8999999999999 1094.0" fill="none" stroke="#0c4fb4" stroke-width="1.3"/><circle cx="1166.0" cy="1096.1" r="9.9" fill="#0d5cc6"/><circle cx="1166.0" cy="1096.1" r="6.5" fill="#5dd67c"/><path d="M1162.8 1096.3 L1165.0 1098.5 L1169.3 1094.0" fill="none" stroke="#0c4fb4" stroke-width="1.3"/><circle cx="1290.0" cy="1096.1" r="9.9" fill="#0d5cc6"/><circle cx="1290.0" cy="1096.1" r="6.5" fill="#5dd67c"/><path d="M1286.8 1096.3 L1289.0 1098.5 L1293.3 1094.0" fill="none" stroke="#0c4fb4" stroke-width="1.3"/><circle cx="1395.7" cy="1096.1" r="9.9" fill="#43454d"/><circle cx="1493.6" cy="1096.1" r="9.9" fill="#43454d"/></svg><span style="position:absolute;left:847.94px;top:1087.15px;line-height:18px;font-size:13.5px;color:#fff;white-space:pre;">1</span><span style="position:absolute;left:1391.94px;top:1087.15px;line-height:18px;font-size:13.5px;color:#fff;white-space:pre;">6</span><span style="position:absolute;left:1489.84px;top:1087.15px;line-height:18px;font-size:13.5px;color:#fff;white-space:pre;">7</span><span style="position:absolute;left:928.40px;top:1107.75px;line-height:13px;font-size:9.7px;color:#fff;white-space:pre;letter-spacing:-0.495px;">Connected</span><span style="position:absolute;left:1023.20px;top:1107.75px;line-height:13px;font-size:9.7px;color:#fff;white-space:pre;letter-spacing:-0.584px;">Setup Device</span><span style="position:absolute;left:1122.40px;top:1107.75px;line-height:13px;font-size:9.7px;color:#fff;white-space:pre;letter-spacing:-0.418px;">Recording in Progress</span><span style="position:absolute;left:1258.00px;top:1107.75px;line-height:13px;font-size:9.7px;color:#fff;white-space:pre;letter-spacing:-0.506px;">Processing Data</span><span style="position:absolute;left:1377.30px;top:1107.75px;line-height:13px;font-size:9.7px;color:#fff;white-space:pre;letter-spacing:-0.472px;">Stop Run</span><span style="position:absolute;left:1471.70px;top:1107.75px;line-height:13px;font-size:9.7px;color:#fff;white-space:pre;letter-spacing:-0.420px;">Completed</span><svg style="position:absolute;left:1616px;top:1098px" width="16" height="16" viewBox="1616 1098 16 16"><rect x="1617.7" y="1099.8" width="13" height="13" rx="2" fill="#15a3ec"/><rect x="1621.6" y="1103" width="1.8" height="6.6" fill="#fff"/><rect x="1625" y="1103" width="1.8" height="6.6" fill="#fff"/></svg><span style="position:absolute;left:1634.00px;top:1097.35px;line-height:17px;font-size:13px;color:#fff;white-space:pre;letter-spacing:0.460px;">Recording started...</span><svg style="position:absolute;left:1761px;top:1098px" width="18" height="16" viewBox="1761 1098 18 16"><rect x="1762.8" y="1099.6" width="13.8" height="13.4" rx="1.6" fill="#e9e4f0"/><rect x="1764.2" y="1103" width="3.2" height="9.4" fill="#2fbf5b"/><rect x="1768.2" y="1106.6" width="3.2" height="5.8" fill="#ef3a7a"/><rect x="1772.2" y="1101.6" width="3.2" height="10.8" fill="#2f9be8"/></svg><span style="position:absolute;left:1783.20px;top:1097.35px;line-height:17px;font-size:13px;color:#fff;white-space:pre;letter-spacing:0.418px;">Analizing data</span><svg style="position:absolute;left:1872px;top:1098px" width="16" height="16" viewBox="1872 1098 16 16"><rect x="1873.6" y="1099.8" width="13.3" height="13" rx="2" fill="#15a3ec"/><path d="M1877.2 1105.2 a3.4 3.4 0 0 1 6 -1.2 M1883.4 1107.4 a3.4 3.4 0 0 1 -6 1.2" fill="none" stroke="#fff" stroke-width="1.4"/><path d="M1883.8 1102.4 V1104.8 H1881.4 M1876.8 1110.2 V1107.8 H1879.2" fill="none" stroke="#fff" stroke-width="1.1"/></svg></body></html>
